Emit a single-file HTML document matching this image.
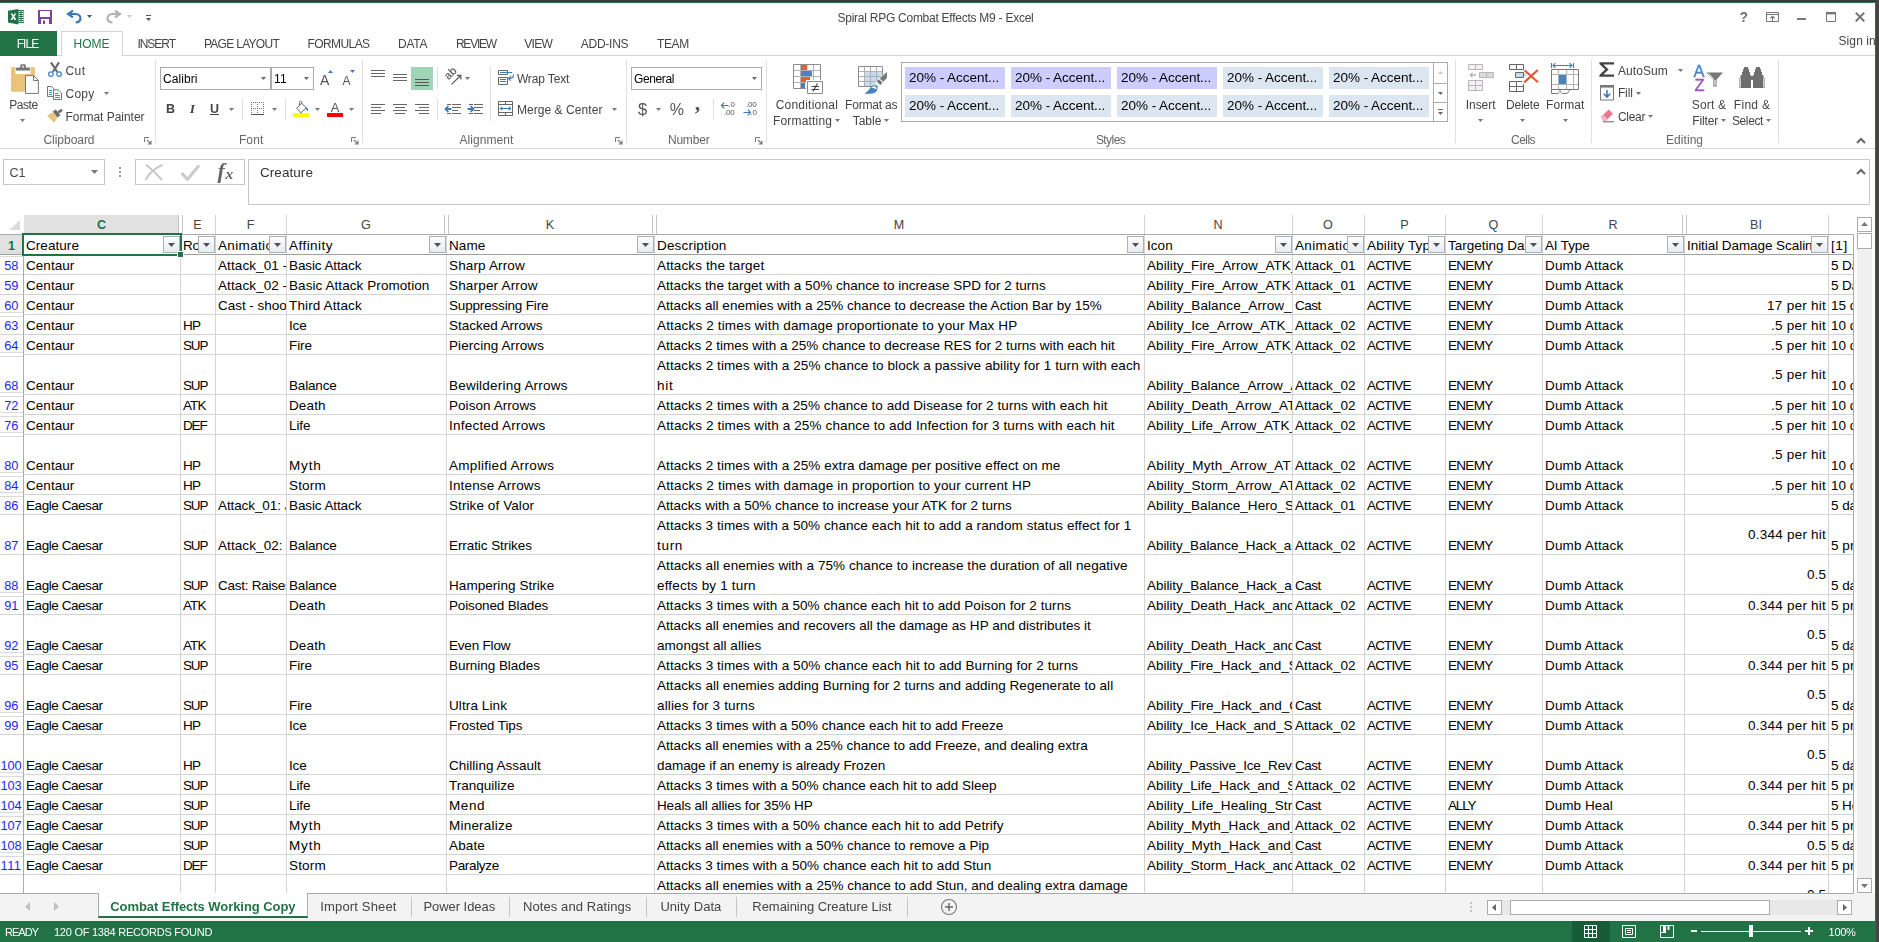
<!DOCTYPE html>
<html lang="en"><head><meta charset="utf-8"><title>Spiral RPG Combat Effects M9 - Excel</title>
<style>
html,body{margin:0;padding:0}
body{width:1879px;height:942px;position:relative;overflow:hidden;background:#fff;font-family:"Liberation Sans",sans-serif;font-size:12px;color:#444}
body div,body svg{position:absolute}
#sheet,#ui{left:0;top:0;width:1879px;height:942px}
#ui{will-change:transform}
.t{white-space:nowrap;line-height:16px;height:16px}
.st{width:100px;height:22px;line-height:22px;font-size:13.5px;color:#000;padding-left:4px;box-sizing:border-box;white-space:nowrap;overflow:hidden}
.c{font-size:13.5px;line-height:19px;color:#000;white-space:nowrap;overflow:hidden;padding-left:2px;box-sizing:border-box}
.c.w{white-space:nowrap;line-height:20px;padding-top:0}
.c.r{text-align:right;padding-right:2px;padding-left:0}
.fb{width:17px;height:17px;box-sizing:border-box;border:1px solid #a9b1b8;background:linear-gradient(#fdfdfe,#e6ebf1)}
</style></head>
<body>
<div id="sheet">
<svg style="left:8px;top:220px;" width="13" height="11" viewBox="0 0 13 11"><path d="M12 0V10H1Z" fill="#dcdcdc"/></svg>
<div style="left:24px;top:215px;width:155px;height:19px;background:#e1e1e1"></div>
<div class="t" style="left:23px;top:215.5px;font-size:12.6px;color:#217346;font-weight:700;line-height:18px;height:18px;width:157px;text-align:center;">C</div>
<div class="t" style="left:180px;top:215.5px;font-size:12.6px;color:#444;line-height:18px;height:18px;width:35px;text-align:center;">E</div>
<div class="t" style="left:215px;top:215.5px;font-size:12.6px;color:#444;line-height:18px;height:18px;width:71px;text-align:center;">F</div>
<div class="t" style="left:286px;top:215.5px;font-size:12.6px;color:#444;line-height:18px;height:18px;width:160px;text-align:center;">G</div>
<div class="t" style="left:446px;top:215.5px;font-size:12.6px;color:#444;line-height:18px;height:18px;width:208px;text-align:center;">K</div>
<div class="t" style="left:654px;top:215.5px;font-size:12.6px;color:#444;line-height:18px;height:18px;width:490px;text-align:center;">M</div>
<div class="t" style="left:1144px;top:215.5px;font-size:12.6px;color:#444;line-height:18px;height:18px;width:148px;text-align:center;">N</div>
<div class="t" style="left:1292px;top:215.5px;font-size:12.6px;color:#444;line-height:18px;height:18px;width:72px;text-align:center;">O</div>
<div class="t" style="left:1364px;top:215.5px;font-size:12.6px;color:#444;line-height:18px;height:18px;width:81px;text-align:center;">P</div>
<div class="t" style="left:1445px;top:215.5px;font-size:12.6px;color:#444;line-height:18px;height:18px;width:97px;text-align:center;">Q</div>
<div class="t" style="left:1542px;top:215.5px;font-size:12.6px;color:#444;line-height:18px;height:18px;width:142px;text-align:center;">R</div>
<div class="t" style="left:1684px;top:215.5px;font-size:12.6px;color:#444;line-height:18px;height:18px;width:144px;text-align:center;">BI</div>
<div style="left:178px;top:215px;width:1px;height:19px;background:#c4c4c4"></div>
<div style="left:182px;top:215px;width:1px;height:19px;background:#c4c4c4"></div>
<div style="left:215px;top:215px;width:1px;height:19px;background:#d4d4d4"></div>
<div style="left:286px;top:215px;width:1px;height:19px;background:#d4d4d4"></div>
<div style="left:444px;top:215px;width:1px;height:19px;background:#c4c4c4"></div>
<div style="left:448px;top:215px;width:1px;height:19px;background:#c4c4c4"></div>
<div style="left:652px;top:215px;width:1px;height:19px;background:#c4c4c4"></div>
<div style="left:656px;top:215px;width:1px;height:19px;background:#c4c4c4"></div>
<div style="left:1144px;top:215px;width:1px;height:19px;background:#d4d4d4"></div>
<div style="left:1292px;top:215px;width:1px;height:19px;background:#d4d4d4"></div>
<div style="left:1364px;top:215px;width:1px;height:19px;background:#d4d4d4"></div>
<div style="left:1445px;top:215px;width:1px;height:19px;background:#d4d4d4"></div>
<div style="left:1542px;top:215px;width:1px;height:19px;background:#d4d4d4"></div>
<div style="left:1682px;top:215px;width:1px;height:19px;background:#c4c4c4"></div>
<div style="left:1686px;top:215px;width:1px;height:19px;background:#c4c4c4"></div>
<div style="left:1828px;top:215px;width:1px;height:19px;background:#d4d4d4"></div>
<div style="left:180px;top:234px;width:1px;height:659px;background:#d4d4d4"></div>
<div style="left:215px;top:234px;width:1px;height:659px;background:#d4d4d4"></div>
<div style="left:286px;top:234px;width:1px;height:659px;background:#d4d4d4"></div>
<div style="left:446px;top:234px;width:1px;height:659px;background:#d4d4d4"></div>
<div style="left:654px;top:234px;width:1px;height:659px;background:#d4d4d4"></div>
<div style="left:1144px;top:234px;width:1px;height:659px;background:#d4d4d4"></div>
<div style="left:1292px;top:234px;width:1px;height:659px;background:#d4d4d4"></div>
<div style="left:1364px;top:234px;width:1px;height:659px;background:#d4d4d4"></div>
<div style="left:1445px;top:234px;width:1px;height:659px;background:#d4d4d4"></div>
<div style="left:1542px;top:234px;width:1px;height:659px;background:#d4d4d4"></div>
<div style="left:1684px;top:234px;width:1px;height:659px;background:#d4d4d4"></div>
<div style="left:1828px;top:234px;width:1px;height:659px;background:#d4d4d4"></div>
<div style="left:1853px;top:234px;width:1px;height:659px;background:#d4d4d4"></div>
<div style="left:24px;top:254px;width:1830px;height:1px;background:#d4d4d4"></div>
<div style="left:24px;top:274px;width:1830px;height:1px;background:#d4d4d4"></div>
<div style="left:24px;top:294px;width:1830px;height:1px;background:#d4d4d4"></div>
<div style="left:24px;top:314px;width:1830px;height:1px;background:#d4d4d4"></div>
<div style="left:24px;top:334px;width:1830px;height:1px;background:#d4d4d4"></div>
<div style="left:24px;top:354px;width:1830px;height:1px;background:#d4d4d4"></div>
<div style="left:24px;top:394px;width:1830px;height:1px;background:#d4d4d4"></div>
<div style="left:24px;top:414px;width:1830px;height:1px;background:#d4d4d4"></div>
<div style="left:24px;top:434px;width:1830px;height:1px;background:#d4d4d4"></div>
<div style="left:24px;top:474px;width:1830px;height:1px;background:#d4d4d4"></div>
<div style="left:24px;top:494px;width:1830px;height:1px;background:#d4d4d4"></div>
<div style="left:24px;top:514px;width:1830px;height:1px;background:#d4d4d4"></div>
<div style="left:24px;top:554px;width:1830px;height:1px;background:#d4d4d4"></div>
<div style="left:24px;top:594px;width:1830px;height:1px;background:#d4d4d4"></div>
<div style="left:24px;top:614px;width:1830px;height:1px;background:#d4d4d4"></div>
<div style="left:24px;top:654px;width:1830px;height:1px;background:#d4d4d4"></div>
<div style="left:24px;top:674px;width:1830px;height:1px;background:#d4d4d4"></div>
<div style="left:24px;top:714px;width:1830px;height:1px;background:#d4d4d4"></div>
<div style="left:24px;top:734px;width:1830px;height:1px;background:#d4d4d4"></div>
<div style="left:24px;top:774px;width:1830px;height:1px;background:#d4d4d4"></div>
<div style="left:24px;top:794px;width:1830px;height:1px;background:#d4d4d4"></div>
<div style="left:24px;top:814px;width:1830px;height:1px;background:#d4d4d4"></div>
<div style="left:24px;top:834px;width:1830px;height:1px;background:#d4d4d4"></div>
<div style="left:24px;top:854px;width:1830px;height:1px;background:#d4d4d4"></div>
<div style="left:24px;top:874px;width:1830px;height:1px;background:#d4d4d4"></div>
<div style="left:0px;top:234px;width:23px;height:20px;background:#e1e1e1"></div>
<div style="left:0px;top:252px;width:23px;height:1px;background:#dadada"></div>
<div style="left:0px;top:256px;width:23px;height:1px;background:#dadada"></div>
<div style="left:0px;top:274px;width:23px;height:1px;background:#d4d4d4"></div>
<div style="left:0px;top:294px;width:23px;height:1px;background:#d4d4d4"></div>
<div style="left:0px;top:312px;width:23px;height:1px;background:#dadada"></div>
<div style="left:0px;top:316px;width:23px;height:1px;background:#dadada"></div>
<div style="left:0px;top:334px;width:23px;height:1px;background:#d4d4d4"></div>
<div style="left:0px;top:352px;width:23px;height:1px;background:#dadada"></div>
<div style="left:0px;top:356px;width:23px;height:1px;background:#dadada"></div>
<div style="left:0px;top:392px;width:23px;height:1px;background:#dadada"></div>
<div style="left:0px;top:396px;width:23px;height:1px;background:#dadada"></div>
<div style="left:0px;top:412px;width:23px;height:1px;background:#dadada"></div>
<div style="left:0px;top:416px;width:23px;height:1px;background:#dadada"></div>
<div style="left:0px;top:432px;width:23px;height:1px;background:#dadada"></div>
<div style="left:0px;top:436px;width:23px;height:1px;background:#dadada"></div>
<div style="left:0px;top:472px;width:23px;height:1px;background:#dadada"></div>
<div style="left:0px;top:476px;width:23px;height:1px;background:#dadada"></div>
<div style="left:0px;top:492px;width:23px;height:1px;background:#dadada"></div>
<div style="left:0px;top:496px;width:23px;height:1px;background:#dadada"></div>
<div style="left:0px;top:514px;width:23px;height:1px;background:#d4d4d4"></div>
<div style="left:0px;top:554px;width:23px;height:1px;background:#d4d4d4"></div>
<div style="left:0px;top:592px;width:23px;height:1px;background:#dadada"></div>
<div style="left:0px;top:596px;width:23px;height:1px;background:#dadada"></div>
<div style="left:0px;top:614px;width:23px;height:1px;background:#d4d4d4"></div>
<div style="left:0px;top:652px;width:23px;height:1px;background:#dadada"></div>
<div style="left:0px;top:656px;width:23px;height:1px;background:#dadada"></div>
<div style="left:0px;top:674px;width:23px;height:1px;background:#d4d4d4"></div>
<div style="left:0px;top:712px;width:23px;height:1px;background:#dadada"></div>
<div style="left:0px;top:716px;width:23px;height:1px;background:#dadada"></div>
<div style="left:0px;top:734px;width:23px;height:1px;background:#d4d4d4"></div>
<div style="left:0px;top:772px;width:23px;height:1px;background:#dadada"></div>
<div style="left:0px;top:776px;width:23px;height:1px;background:#dadada"></div>
<div style="left:0px;top:794px;width:23px;height:1px;background:#d4d4d4"></div>
<div style="left:0px;top:812px;width:23px;height:1px;background:#dadada"></div>
<div style="left:0px;top:816px;width:23px;height:1px;background:#dadada"></div>
<div style="left:0px;top:834px;width:23px;height:1px;background:#d4d4d4"></div>
<div style="left:0px;top:852px;width:23px;height:1px;background:#dadada"></div>
<div style="left:0px;top:856px;width:23px;height:1px;background:#dadada"></div>
<div style="left:0px;top:874px;width:23px;height:1px;background:#d4d4d4"></div>
<div style="left:23px;top:234px;width:1px;height:659px;background:#ababab"></div>
<div class="t" style="left:0px;top:236.5px;font-size:12.8px;color:#217346;font-weight:700;line-height:18px;height:18px;width:23px;text-align:center;">1</div>
<div class="t" style="left:4.2px;top:256.5px;letter-spacing:-0.017px;font-size:12.8px;color:#1f1fff;line-height:18px;height:18px;">58</div>
<div class="t" style="left:4.2px;top:276.5px;letter-spacing:-0.017px;font-size:12.8px;color:#1f1fff;line-height:18px;height:18px;">59</div>
<div class="t" style="left:4.2px;top:296.5px;letter-spacing:-0.017px;font-size:12.8px;color:#1f1fff;line-height:18px;height:18px;">60</div>
<div class="t" style="left:4.2px;top:316.5px;letter-spacing:-0.017px;font-size:12.8px;color:#1f1fff;line-height:18px;height:18px;">63</div>
<div class="t" style="left:4.2px;top:336.5px;letter-spacing:-0.017px;font-size:12.8px;color:#1f1fff;line-height:18px;height:18px;">64</div>
<div class="t" style="left:4.2px;top:376.5px;letter-spacing:-0.017px;font-size:12.8px;color:#1f1fff;line-height:18px;height:18px;">68</div>
<div class="t" style="left:4.2px;top:396.5px;letter-spacing:-0.017px;font-size:12.8px;color:#1f1fff;line-height:18px;height:18px;">72</div>
<div class="t" style="left:4.2px;top:416.5px;letter-spacing:-0.017px;font-size:12.8px;color:#1f1fff;line-height:18px;height:18px;">76</div>
<div class="t" style="left:4.2px;top:456.5px;letter-spacing:-0.017px;font-size:12.8px;color:#1f1fff;line-height:18px;height:18px;">80</div>
<div class="t" style="left:4.2px;top:476.5px;letter-spacing:-0.017px;font-size:12.8px;color:#1f1fff;line-height:18px;height:18px;">84</div>
<div class="t" style="left:4.2px;top:496.5px;letter-spacing:-0.017px;font-size:12.8px;color:#1f1fff;line-height:18px;height:18px;">86</div>
<div class="t" style="left:4.2px;top:536.5px;letter-spacing:-0.017px;font-size:12.8px;color:#1f1fff;line-height:18px;height:18px;">87</div>
<div class="t" style="left:4.2px;top:576.5px;letter-spacing:-0.017px;font-size:12.8px;color:#1f1fff;line-height:18px;height:18px;">88</div>
<div class="t" style="left:4.2px;top:596.5px;letter-spacing:-0.017px;font-size:12.8px;color:#1f1fff;line-height:18px;height:18px;">91</div>
<div class="t" style="left:4.2px;top:636.5px;letter-spacing:-0.017px;font-size:12.8px;color:#1f1fff;line-height:18px;height:18px;">92</div>
<div class="t" style="left:4.2px;top:656.5px;letter-spacing:-0.017px;font-size:12.8px;color:#1f1fff;line-height:18px;height:18px;">95</div>
<div class="t" style="left:4.2px;top:696.5px;letter-spacing:-0.017px;font-size:12.8px;color:#1f1fff;line-height:18px;height:18px;">96</div>
<div class="t" style="left:4.2px;top:716.5px;letter-spacing:-0.017px;font-size:12.8px;color:#1f1fff;line-height:18px;height:18px;">99</div>
<div class="t" style="left:0.6px;top:756.5px;letter-spacing:-0.186px;font-size:12.8px;color:#1f1fff;line-height:18px;height:18px;">100</div>
<div class="t" style="left:0.6px;top:776.5px;letter-spacing:-0.186px;font-size:12.8px;color:#1f1fff;line-height:18px;height:18px;">103</div>
<div class="t" style="left:0.6px;top:796.5px;letter-spacing:-0.186px;font-size:12.8px;color:#1f1fff;line-height:18px;height:18px;">104</div>
<div class="t" style="left:0.6px;top:816.5px;letter-spacing:-0.186px;font-size:12.8px;color:#1f1fff;line-height:18px;height:18px;">107</div>
<div class="t" style="left:0.6px;top:836.5px;letter-spacing:-0.186px;font-size:12.8px;color:#1f1fff;line-height:18px;height:18px;">108</div>
<div class="t" style="left:0.6px;top:856.5px;letter-spacing:0.449px;font-size:12.8px;color:#1f1fff;line-height:18px;height:18px;">111</div>
<div style="left:0px;top:234px;width:1854px;height:1px;background:#ababab"></div>
<div style="left:0px;top:254px;width:1854px;height:1px;background:#a0a0a0"></div>
<div style="left:1853px;top:234px;width:1px;height:659px;background:#ababab"></div>
<div class="c" style="left:24px;top:236px;width:140px;height:18px;letter-spacing:0.053px;">Creature</div>
<div class="c" style="left:181px;top:236px;width:18px;height:18px;letter-spacing:-0.281px;">Role</div>
<div class="c" style="left:216px;top:236px;width:54px;height:18px;letter-spacing:0.345px;">Animation</div>
<div class="c" style="left:287px;top:236px;width:143px;height:18px;letter-spacing:0.455px;">Affinity</div>
<div class="c" style="left:447px;top:236px;width:191px;height:18px;letter-spacing:0.078px;">Name</div>
<div class="c" style="left:655px;top:236px;width:473px;height:18px;letter-spacing:0.182px;">Description</div>
<div class="c" style="left:1145px;top:236px;width:131px;height:18px;letter-spacing:0.062px;">Icon</div>
<div class="c" style="left:1293px;top:236px;width:55px;height:18px;letter-spacing:0.345px;">Animation</div>
<div class="c" style="left:1365px;top:236px;width:64px;height:18px;letter-spacing:0.171px;">Ability Type</div>
<div class="c" style="left:1446px;top:236px;width:80px;height:18px;letter-spacing:-0.009px;">Targeting Data</div>
<div class="c" style="left:1543px;top:236px;width:125px;height:18px;letter-spacing:-0.132px;">AI Type</div>
<div class="c" style="left:1685px;top:236px;width:127px;height:18px;letter-spacing:-0.062px;">Initial Damage Scaling</div>
<div class="c" style="left:1829px;top:236px;width:24px;height:18px;letter-spacing:0.594px;">[1]</div>
<div class="c" style="left:24px;top:256px;width:156px;height:18px;letter-spacing:0.045px;">Centaur</div>
<div class="c" style="left:216px;top:256px;width:70px;height:18px;letter-spacing:0.091px;">Attack_01 - shoot</div>
<div class="c" style="left:287px;top:256px;width:159px;height:18px;letter-spacing:-0.100px;">Basic Attack</div>
<div class="c" style="left:447px;top:256px;width:207px;height:18px;letter-spacing:0.148px;">Sharp Arrow</div>
<div class="c" style="left:655px;top:256px;width:489px;height:18px;letter-spacing:0.122px;">Attacks the target</div>
<div class="c" style="left:1145px;top:256px;width:147px;height:18px;letter-spacing:0.074px;">Ability_Fire_Arrow_ATK_01</div>
<div class="c" style="left:1293px;top:256px;width:71px;height:18px;letter-spacing:0.068px;">Attack_01</div>
<div class="c" style="left:1365px;top:256px;width:80px;height:18px;letter-spacing:-0.865px;">ACTIVE</div>
<div class="c" style="left:1446px;top:256px;width:96px;height:18px;letter-spacing:-0.706px;">ENEMY</div>
<div class="c" style="left:1543px;top:256px;width:141px;height:18px;letter-spacing:0.163px;">Dumb Attack</div>
<div class="c" style="left:1829px;top:256px;width:24px;height:18px;letter-spacing:-0.162px;">5 Damage</div>
<div class="c" style="left:24px;top:276px;width:156px;height:18px;letter-spacing:0.045px;">Centaur</div>
<div class="c" style="left:216px;top:276px;width:70px;height:18px;letter-spacing:0.091px;">Attack_02 - shoot</div>
<div class="c" style="left:287px;top:276px;width:159px;height:18px;letter-spacing:0.073px;">Basic Attack Promotion</div>
<div class="c" style="left:447px;top:276px;width:207px;height:18px;letter-spacing:0.179px;">Sharper Arrow</div>
<div class="c" style="left:655px;top:276px;width:489px;height:18px;letter-spacing:0.011px;">Attacks the target with a 50% chance to increase SPD for 2 turns</div>
<div class="c" style="left:1145px;top:276px;width:147px;height:18px;letter-spacing:0.074px;">Ability_Fire_Arrow_ATK_02</div>
<div class="c" style="left:1293px;top:276px;width:71px;height:18px;letter-spacing:0.068px;">Attack_01</div>
<div class="c" style="left:1365px;top:276px;width:80px;height:18px;letter-spacing:-0.865px;">ACTIVE</div>
<div class="c" style="left:1446px;top:276px;width:96px;height:18px;letter-spacing:-0.706px;">ENEMY</div>
<div class="c" style="left:1543px;top:276px;width:141px;height:18px;letter-spacing:0.163px;">Dumb Attack</div>
<div class="c" style="left:1829px;top:276px;width:24px;height:18px;letter-spacing:-0.162px;">5 Damage</div>
<div class="c" style="left:24px;top:296px;width:156px;height:18px;letter-spacing:0.045px;">Centaur</div>
<div class="c" style="left:216px;top:296px;width:70px;height:18px;letter-spacing:-0.036px;">Cast - shoot up</div>
<div class="c" style="left:287px;top:296px;width:159px;height:18px;letter-spacing:0.134px;">Third Attack</div>
<div class="c" style="left:447px;top:296px;width:207px;height:18px;letter-spacing:-0.171px;">Suppressing Fire</div>
<div class="c" style="left:655px;top:296px;width:489px;height:18px;letter-spacing:0.008px;">Attacks all enemies with a 25% chance to decrease the Action Bar by 15%</div>
<div class="c" style="left:1145px;top:296px;width:147px;height:18px;letter-spacing:0.097px;">Ability_Balance_Arrow_Rain</div>
<div class="c" style="left:1293px;top:296px;width:71px;height:18px;letter-spacing:-0.465px;">Cast</div>
<div class="c" style="left:1365px;top:296px;width:80px;height:18px;letter-spacing:-0.865px;">ACTIVE</div>
<div class="c" style="left:1446px;top:296px;width:96px;height:18px;letter-spacing:-0.706px;">ENEMY</div>
<div class="c" style="left:1543px;top:296px;width:141px;height:18px;letter-spacing:0.163px;">Dumb Attack</div>
<div class="c r" style="left:1685px;top:296px;width:143px;height:18px;letter-spacing:0.263px;">17 per hit</div>
<div class="c" style="left:1829px;top:296px;width:24px;height:18px;letter-spacing:-0.035px;">15 damage</div>
<div class="c" style="left:24px;top:316px;width:156px;height:18px;letter-spacing:0.045px;">Centaur</div>
<div class="c" style="left:181px;top:316px;width:34px;height:18px;letter-spacing:-0.836px;">HP</div>
<div class="c" style="left:287px;top:316px;width:159px;height:18px;letter-spacing:-0.141px;">Ice</div>
<div class="c" style="left:447px;top:316px;width:207px;height:18px;letter-spacing:-0.019px;">Stacked Arrows</div>
<div class="c" style="left:655px;top:316px;width:489px;height:18px;letter-spacing:0.152px;">Attacks 2 times with damage proportionate to your Max HP</div>
<div class="c" style="left:1145px;top:316px;width:147px;height:18px;letter-spacing:0.078px;">Ability_Ice_Arrow_ATK_02</div>
<div class="c" style="left:1293px;top:316px;width:71px;height:18px;letter-spacing:0.068px;">Attack_02</div>
<div class="c" style="left:1365px;top:316px;width:80px;height:18px;letter-spacing:-0.865px;">ACTIVE</div>
<div class="c" style="left:1446px;top:316px;width:96px;height:18px;letter-spacing:-0.706px;">ENEMY</div>
<div class="c" style="left:1543px;top:316px;width:141px;height:18px;letter-spacing:0.163px;">Dumb Attack</div>
<div class="c r" style="left:1685px;top:316px;width:143px;height:18px;letter-spacing:0.256px;">.5 per hit</div>
<div class="c" style="left:1829px;top:316px;width:24px;height:18px;letter-spacing:-0.035px;">10 damage</div>
<div class="c" style="left:24px;top:336px;width:156px;height:18px;letter-spacing:0.045px;">Centaur</div>
<div class="c" style="left:181px;top:336px;width:34px;height:18px;letter-spacing:-1.167px;">SUP</div>
<div class="c" style="left:287px;top:336px;width:159px;height:18px;letter-spacing:-0.105px;">Fire</div>
<div class="c" style="left:447px;top:336px;width:207px;height:18px;letter-spacing:0.079px;">Piercing Arrows</div>
<div class="c" style="left:655px;top:336px;width:489px;height:18px;">Attacks 2 times with a 25% chance to decrease RES for 2 turns with each hit</div>
<div class="c" style="left:1145px;top:336px;width:147px;height:18px;letter-spacing:0.074px;">Ability_Fire_Arrow_ATK_03</div>
<div class="c" style="left:1293px;top:336px;width:71px;height:18px;letter-spacing:0.068px;">Attack_02</div>
<div class="c" style="left:1365px;top:336px;width:80px;height:18px;letter-spacing:-0.865px;">ACTIVE</div>
<div class="c" style="left:1446px;top:336px;width:96px;height:18px;letter-spacing:-0.706px;">ENEMY</div>
<div class="c" style="left:1543px;top:336px;width:141px;height:18px;letter-spacing:0.163px;">Dumb Attack</div>
<div class="c r" style="left:1685px;top:336px;width:143px;height:18px;letter-spacing:0.256px;">.5 per hit</div>
<div class="c" style="left:1829px;top:336px;width:24px;height:18px;letter-spacing:-0.035px;">10 damage</div>
<div class="c" style="left:24px;top:376px;width:156px;height:18px;letter-spacing:0.045px;">Centaur</div>
<div class="c" style="left:181px;top:376px;width:34px;height:18px;letter-spacing:-1.167px;">SUP</div>
<div class="c" style="left:287px;top:376px;width:159px;height:18px;letter-spacing:-0.163px;">Balance</div>
<div class="c" style="left:447px;top:376px;width:207px;height:18px;letter-spacing:0.216px;">Bewildering Arrows</div>
<div class="c" style="left:655px;top:356px;width:489px;height:20px;letter-spacing:0.085px;">Attacks 2 times with a 25% chance to block a passive ability for 1 turn with each</div>
<div class="c" style="left:655px;top:376px;width:489px;height:20px;letter-spacing:0.693px;">hit</div>
<div class="c" style="left:1145px;top:376px;width:147px;height:18px;letter-spacing:0.040px;">Ability_Balance_Arrow_ATK</div>
<div class="c" style="left:1293px;top:376px;width:71px;height:18px;letter-spacing:0.068px;">Attack_02</div>
<div class="c" style="left:1365px;top:376px;width:80px;height:18px;letter-spacing:-0.865px;">ACTIVE</div>
<div class="c" style="left:1446px;top:376px;width:96px;height:18px;letter-spacing:-0.706px;">ENEMY</div>
<div class="c" style="left:1543px;top:376px;width:141px;height:18px;letter-spacing:0.163px;">Dumb Attack</div>
<div class="c r" style="left:1685px;top:356px;width:143px;height:38px;line-height:37px;letter-spacing:0.256px;">.5 per hit</div>
<div class="c" style="left:1829px;top:376px;width:24px;height:18px;letter-spacing:-0.035px;">10 damage</div>
<div class="c" style="left:24px;top:396px;width:156px;height:18px;letter-spacing:0.045px;">Centaur</div>
<div class="c" style="left:181px;top:396px;width:34px;height:18px;letter-spacing:-0.885px;">ATK</div>
<div class="c" style="left:287px;top:396px;width:159px;height:18px;letter-spacing:0.125px;">Death</div>
<div class="c" style="left:447px;top:396px;width:207px;height:18px;letter-spacing:0.056px;">Poison Arrows</div>
<div class="c" style="left:655px;top:396px;width:489px;height:18px;letter-spacing:0.065px;">Attacks 2 times with a 25% chance to add Disease for 2 turns with each hit</div>
<div class="c" style="left:1145px;top:396px;width:147px;height:18px;letter-spacing:0.112px;">Ability_Death_Arrow_ATK_02</div>
<div class="c" style="left:1293px;top:396px;width:71px;height:18px;letter-spacing:0.068px;">Attack_02</div>
<div class="c" style="left:1365px;top:396px;width:80px;height:18px;letter-spacing:-0.865px;">ACTIVE</div>
<div class="c" style="left:1446px;top:396px;width:96px;height:18px;letter-spacing:-0.706px;">ENEMY</div>
<div class="c" style="left:1543px;top:396px;width:141px;height:18px;letter-spacing:0.163px;">Dumb Attack</div>
<div class="c r" style="left:1685px;top:396px;width:143px;height:18px;letter-spacing:0.256px;">.5 per hit</div>
<div class="c" style="left:1829px;top:396px;width:24px;height:18px;letter-spacing:-0.035px;">10 damage</div>
<div class="c" style="left:24px;top:416px;width:156px;height:18px;letter-spacing:0.045px;">Centaur</div>
<div class="c" style="left:181px;top:416px;width:34px;height:18px;letter-spacing:-1.182px;">DEF</div>
<div class="c" style="left:287px;top:416px;width:159px;height:18px;letter-spacing:-0.090px;">Life</div>
<div class="c" style="left:447px;top:416px;width:207px;height:18px;letter-spacing:0.223px;">Infected Arrows</div>
<div class="c" style="left:655px;top:416px;width:489px;height:18px;letter-spacing:0.128px;">Attacks 2 times with a 25% chance to add Infection for 3 turns with each hit</div>
<div class="c" style="left:1145px;top:416px;width:147px;height:18px;letter-spacing:0.077px;">Ability_Life_Arrow_ATK_02</div>
<div class="c" style="left:1293px;top:416px;width:71px;height:18px;letter-spacing:0.068px;">Attack_02</div>
<div class="c" style="left:1365px;top:416px;width:80px;height:18px;letter-spacing:-0.865px;">ACTIVE</div>
<div class="c" style="left:1446px;top:416px;width:96px;height:18px;letter-spacing:-0.706px;">ENEMY</div>
<div class="c" style="left:1543px;top:416px;width:141px;height:18px;letter-spacing:0.163px;">Dumb Attack</div>
<div class="c r" style="left:1685px;top:416px;width:143px;height:18px;letter-spacing:0.256px;">.5 per hit</div>
<div class="c" style="left:1829px;top:416px;width:24px;height:18px;letter-spacing:-0.035px;">10 damage</div>
<div class="c" style="left:24px;top:456px;width:156px;height:18px;letter-spacing:0.045px;">Centaur</div>
<div class="c" style="left:181px;top:456px;width:34px;height:18px;letter-spacing:-0.836px;">HP</div>
<div class="c" style="left:287px;top:456px;width:159px;height:18px;letter-spacing:0.836px;">Myth</div>
<div class="c" style="left:447px;top:456px;width:207px;height:18px;letter-spacing:0.296px;">Amplified Arrows</div>
<div class="c" style="left:655px;top:456px;width:489px;height:20px;letter-spacing:0.079px;">Attacks 2 times with a 25% extra damage per positive effect on me</div>
<div class="c" style="left:1145px;top:456px;width:147px;height:18px;letter-spacing:0.226px;">Ability_Myth_Arrow_ATK_02</div>
<div class="c" style="left:1293px;top:456px;width:71px;height:18px;letter-spacing:0.068px;">Attack_02</div>
<div class="c" style="left:1365px;top:456px;width:80px;height:18px;letter-spacing:-0.865px;">ACTIVE</div>
<div class="c" style="left:1446px;top:456px;width:96px;height:18px;letter-spacing:-0.706px;">ENEMY</div>
<div class="c" style="left:1543px;top:456px;width:141px;height:18px;letter-spacing:0.163px;">Dumb Attack</div>
<div class="c r" style="left:1685px;top:436px;width:143px;height:38px;line-height:37px;letter-spacing:0.256px;">.5 per hit</div>
<div class="c" style="left:1829px;top:456px;width:24px;height:18px;letter-spacing:-0.035px;">10 damage</div>
<div class="c" style="left:24px;top:476px;width:156px;height:18px;letter-spacing:0.045px;">Centaur</div>
<div class="c" style="left:181px;top:476px;width:34px;height:18px;letter-spacing:-0.836px;">HP</div>
<div class="c" style="left:287px;top:476px;width:159px;height:18px;letter-spacing:0.178px;">Storm</div>
<div class="c" style="left:447px;top:476px;width:207px;height:18px;letter-spacing:0.169px;">Intense Arrows</div>
<div class="c" style="left:655px;top:476px;width:489px;height:18px;letter-spacing:0.169px;">Attacks 2 times with damage in proportion to your current HP</div>
<div class="c" style="left:1145px;top:476px;width:147px;height:18px;letter-spacing:0.123px;">Ability_Storm_Arrow_ATK_02</div>
<div class="c" style="left:1293px;top:476px;width:71px;height:18px;letter-spacing:0.068px;">Attack_02</div>
<div class="c" style="left:1365px;top:476px;width:80px;height:18px;letter-spacing:-0.865px;">ACTIVE</div>
<div class="c" style="left:1446px;top:476px;width:96px;height:18px;letter-spacing:-0.706px;">ENEMY</div>
<div class="c" style="left:1543px;top:476px;width:141px;height:18px;letter-spacing:0.163px;">Dumb Attack</div>
<div class="c r" style="left:1685px;top:476px;width:143px;height:18px;letter-spacing:0.256px;">.5 per hit</div>
<div class="c" style="left:1829px;top:476px;width:24px;height:18px;letter-spacing:-0.035px;">10 damage</div>
<div class="c" style="left:24px;top:496px;width:156px;height:18px;letter-spacing:-0.438px;">Eagle Caesar</div>
<div class="c" style="left:181px;top:496px;width:34px;height:18px;letter-spacing:-1.167px;">SUP</div>
<div class="c" style="left:216px;top:496px;width:70px;height:18px;letter-spacing:-0.100px;">Attack_01: Jab</div>
<div class="c" style="left:287px;top:496px;width:159px;height:18px;letter-spacing:-0.100px;">Basic Attack</div>
<div class="c" style="left:447px;top:496px;width:207px;height:18px;letter-spacing:0.087px;">Strike of Valor</div>
<div class="c" style="left:655px;top:496px;width:489px;height:18px;letter-spacing:0.016px;">Attacks with a 50% chance to increase your ATK for 2 turns</div>
<div class="c" style="left:1145px;top:496px;width:147px;height:18px;letter-spacing:0.065px;">Ability_Balance_Hero_Strike</div>
<div class="c" style="left:1293px;top:496px;width:71px;height:18px;letter-spacing:0.068px;">Attack_01</div>
<div class="c" style="left:1365px;top:496px;width:80px;height:18px;letter-spacing:-0.865px;">ACTIVE</div>
<div class="c" style="left:1446px;top:496px;width:96px;height:18px;letter-spacing:-0.706px;">ENEMY</div>
<div class="c" style="left:1543px;top:496px;width:141px;height:18px;letter-spacing:0.163px;">Dumb Attack</div>
<div class="c" style="left:1829px;top:496px;width:24px;height:18px;letter-spacing:-0.051px;">5 damage</div>
<div class="c" style="left:24px;top:536px;width:156px;height:18px;letter-spacing:-0.438px;">Eagle Caesar</div>
<div class="c" style="left:181px;top:536px;width:34px;height:18px;letter-spacing:-1.167px;">SUP</div>
<div class="c" style="left:216px;top:536px;width:70px;height:18px;letter-spacing:0.087px;">Attack_02:</div>
<div class="c" style="left:287px;top:536px;width:159px;height:18px;letter-spacing:-0.163px;">Balance</div>
<div class="c" style="left:447px;top:536px;width:207px;height:18px;letter-spacing:-0.076px;">Erratic Strikes</div>
<div class="c" style="left:655px;top:516px;width:489px;height:20px;letter-spacing:0.071px;">Attacks 3 times with a 50% chance each hit to add a random status effect for 1</div>
<div class="c" style="left:655px;top:536px;width:489px;height:20px;letter-spacing:0.688px;">turn</div>
<div class="c" style="left:1145px;top:536px;width:147px;height:18px;letter-spacing:-0.060px;">Ability_Balance_Hack_and_Slash</div>
<div class="c" style="left:1293px;top:536px;width:71px;height:18px;letter-spacing:0.068px;">Attack_02</div>
<div class="c" style="left:1365px;top:536px;width:80px;height:18px;letter-spacing:-0.865px;">ACTIVE</div>
<div class="c" style="left:1446px;top:536px;width:96px;height:18px;letter-spacing:-0.706px;">ENEMY</div>
<div class="c" style="left:1543px;top:536px;width:141px;height:18px;letter-spacing:0.163px;">Dumb Attack</div>
<div class="c r" style="left:1685px;top:516px;width:143px;height:38px;line-height:37px;letter-spacing:0.220px;">0.344 per hit</div>
<div class="c" style="left:1829px;top:536px;width:24px;height:18px;letter-spacing:0.044px;">5 prc</div>
<div class="c" style="left:24px;top:576px;width:156px;height:18px;letter-spacing:-0.438px;">Eagle Caesar</div>
<div class="c" style="left:181px;top:576px;width:34px;height:18px;letter-spacing:-1.167px;">SUP</div>
<div class="c" style="left:216px;top:576px;width:70px;height:18px;letter-spacing:-0.248px;">Cast: Raises sword</div>
<div class="c" style="left:287px;top:576px;width:159px;height:18px;letter-spacing:-0.163px;">Balance</div>
<div class="c" style="left:447px;top:576px;width:207px;height:18px;letter-spacing:0.060px;">Hampering Strike</div>
<div class="c" style="left:655px;top:556px;width:489px;height:20px;letter-spacing:0.068px;">Attacks all enemies with a 75% chance to increase the duration of all negative</div>
<div class="c" style="left:655px;top:576px;width:489px;height:20px;letter-spacing:0.176px;">effects by 1 turn</div>
<div class="c" style="left:1145px;top:576px;width:147px;height:18px;letter-spacing:-0.039px;">Ability_Balance_Hack_and_Cast</div>
<div class="c" style="left:1293px;top:576px;width:71px;height:18px;letter-spacing:-0.465px;">Cast</div>
<div class="c" style="left:1365px;top:576px;width:80px;height:18px;letter-spacing:-0.865px;">ACTIVE</div>
<div class="c" style="left:1446px;top:576px;width:96px;height:18px;letter-spacing:-0.706px;">ENEMY</div>
<div class="c" style="left:1543px;top:576px;width:141px;height:18px;letter-spacing:0.163px;">Dumb Attack</div>
<div class="c r" style="left:1685px;top:556px;width:143px;height:38px;line-height:37px;letter-spacing:0.073px;">0.5</div>
<div class="c" style="left:1829px;top:576px;width:24px;height:18px;letter-spacing:-0.051px;">5 damage</div>
<div class="c" style="left:24px;top:596px;width:156px;height:18px;letter-spacing:-0.438px;">Eagle Caesar</div>
<div class="c" style="left:181px;top:596px;width:34px;height:18px;letter-spacing:-0.885px;">ATK</div>
<div class="c" style="left:287px;top:596px;width:159px;height:18px;letter-spacing:0.125px;">Death</div>
<div class="c" style="left:447px;top:596px;width:207px;height:18px;letter-spacing:-0.145px;">Poisoned Blades</div>
<div class="c" style="left:655px;top:596px;width:489px;height:18px;letter-spacing:0.052px;">Attacks 3 times with a 50% chance each hit to add Poison for 2 turns</div>
<div class="c" style="left:1145px;top:596px;width:147px;height:18px;">Ability_Death_Hack_and_Slash</div>
<div class="c" style="left:1293px;top:596px;width:71px;height:18px;letter-spacing:0.068px;">Attack_02</div>
<div class="c" style="left:1365px;top:596px;width:80px;height:18px;letter-spacing:-0.865px;">ACTIVE</div>
<div class="c" style="left:1446px;top:596px;width:96px;height:18px;letter-spacing:-0.706px;">ENEMY</div>
<div class="c" style="left:1543px;top:596px;width:141px;height:18px;letter-spacing:0.163px;">Dumb Attack</div>
<div class="c r" style="left:1685px;top:596px;width:143px;height:18px;letter-spacing:0.220px;">0.344 per hit</div>
<div class="c" style="left:1829px;top:596px;width:24px;height:18px;letter-spacing:0.044px;">5 prc</div>
<div class="c" style="left:24px;top:636px;width:156px;height:18px;letter-spacing:-0.438px;">Eagle Caesar</div>
<div class="c" style="left:181px;top:636px;width:34px;height:18px;letter-spacing:-0.885px;">ATK</div>
<div class="c" style="left:287px;top:636px;width:159px;height:18px;letter-spacing:0.125px;">Death</div>
<div class="c" style="left:447px;top:636px;width:207px;height:18px;letter-spacing:-0.198px;">Even Flow</div>
<div class="c" style="left:655px;top:616px;width:489px;height:20px;letter-spacing:0.014px;">Attacks all enemies and recovers all the damage as HP and distributes it</div>
<div class="c" style="left:655px;top:636px;width:489px;height:20px;letter-spacing:0.047px;">amongst all allies</div>
<div class="c" style="left:1145px;top:636px;width:147px;height:18px;letter-spacing:0.024px;">Ability_Death_Hack_and_Cast</div>
<div class="c" style="left:1293px;top:636px;width:71px;height:18px;letter-spacing:-0.465px;">Cast</div>
<div class="c" style="left:1365px;top:636px;width:80px;height:18px;letter-spacing:-0.865px;">ACTIVE</div>
<div class="c" style="left:1446px;top:636px;width:96px;height:18px;letter-spacing:-0.706px;">ENEMY</div>
<div class="c" style="left:1543px;top:636px;width:141px;height:18px;letter-spacing:0.163px;">Dumb Attack</div>
<div class="c r" style="left:1685px;top:616px;width:143px;height:38px;line-height:37px;letter-spacing:0.073px;">0.5</div>
<div class="c" style="left:1829px;top:636px;width:24px;height:18px;letter-spacing:-0.051px;">5 damage</div>
<div class="c" style="left:24px;top:656px;width:156px;height:18px;letter-spacing:-0.438px;">Eagle Caesar</div>
<div class="c" style="left:181px;top:656px;width:34px;height:18px;letter-spacing:-1.167px;">SUP</div>
<div class="c" style="left:287px;top:656px;width:159px;height:18px;letter-spacing:-0.105px;">Fire</div>
<div class="c" style="left:447px;top:656px;width:207px;height:18px;letter-spacing:-0.048px;">Burning Blades</div>
<div class="c" style="left:655px;top:656px;width:489px;height:18px;letter-spacing:0.077px;">Attacks 3 times with a 50% chance each hit to add Burning for 2 turns</div>
<div class="c" style="left:1145px;top:656px;width:147px;height:18px;letter-spacing:-0.040px;">Ability_Fire_Hack_and_Slash</div>
<div class="c" style="left:1293px;top:656px;width:71px;height:18px;letter-spacing:0.068px;">Attack_02</div>
<div class="c" style="left:1365px;top:656px;width:80px;height:18px;letter-spacing:-0.865px;">ACTIVE</div>
<div class="c" style="left:1446px;top:656px;width:96px;height:18px;letter-spacing:-0.706px;">ENEMY</div>
<div class="c" style="left:1543px;top:656px;width:141px;height:18px;letter-spacing:0.163px;">Dumb Attack</div>
<div class="c r" style="left:1685px;top:656px;width:143px;height:18px;letter-spacing:0.220px;">0.344 per hit</div>
<div class="c" style="left:1829px;top:656px;width:24px;height:18px;letter-spacing:0.044px;">5 prc</div>
<div class="c" style="left:24px;top:696px;width:156px;height:18px;letter-spacing:-0.438px;">Eagle Caesar</div>
<div class="c" style="left:181px;top:696px;width:34px;height:18px;letter-spacing:-1.167px;">SUP</div>
<div class="c" style="left:287px;top:696px;width:159px;height:18px;letter-spacing:-0.105px;">Fire</div>
<div class="c" style="left:447px;top:696px;width:207px;height:18px;letter-spacing:0.100px;">Ultra Link</div>
<div class="c" style="left:655px;top:676px;width:489px;height:20px;letter-spacing:0.049px;">Attacks all enemies adding Burning for 2 turns and adding Regenerate to all</div>
<div class="c" style="left:655px;top:696px;width:489px;height:20px;letter-spacing:0.144px;">allies for 3 turns</div>
<div class="c" style="left:1145px;top:696px;width:147px;height:18px;letter-spacing:-0.016px;">Ability_Fire_Hack_and_Cast</div>
<div class="c" style="left:1293px;top:696px;width:71px;height:18px;letter-spacing:-0.465px;">Cast</div>
<div class="c" style="left:1365px;top:696px;width:80px;height:18px;letter-spacing:-0.865px;">ACTIVE</div>
<div class="c" style="left:1446px;top:696px;width:96px;height:18px;letter-spacing:-0.706px;">ENEMY</div>
<div class="c" style="left:1543px;top:696px;width:141px;height:18px;letter-spacing:0.163px;">Dumb Attack</div>
<div class="c r" style="left:1685px;top:676px;width:143px;height:38px;line-height:37px;letter-spacing:0.073px;">0.5</div>
<div class="c" style="left:1829px;top:696px;width:24px;height:18px;letter-spacing:-0.051px;">5 damage</div>
<div class="c" style="left:24px;top:716px;width:156px;height:18px;letter-spacing:-0.438px;">Eagle Caesar</div>
<div class="c" style="left:181px;top:716px;width:34px;height:18px;letter-spacing:-0.836px;">HP</div>
<div class="c" style="left:287px;top:716px;width:159px;height:18px;letter-spacing:-0.141px;">Ice</div>
<div class="c" style="left:447px;top:716px;width:207px;height:18px;letter-spacing:-0.065px;">Frosted Tips</div>
<div class="c" style="left:655px;top:716px;width:489px;height:18px;letter-spacing:-0.008px;">Attacks 3 times with a 50% chance each hit to add Freeze</div>
<div class="c" style="left:1145px;top:716px;width:147px;height:18px;letter-spacing:-0.041px;">Ability_Ice_Hack_and_Slash</div>
<div class="c" style="left:1293px;top:716px;width:71px;height:18px;letter-spacing:0.068px;">Attack_02</div>
<div class="c" style="left:1365px;top:716px;width:80px;height:18px;letter-spacing:-0.865px;">ACTIVE</div>
<div class="c" style="left:1446px;top:716px;width:96px;height:18px;letter-spacing:-0.706px;">ENEMY</div>
<div class="c" style="left:1543px;top:716px;width:141px;height:18px;letter-spacing:0.163px;">Dumb Attack</div>
<div class="c r" style="left:1685px;top:716px;width:143px;height:18px;letter-spacing:0.220px;">0.344 per hit</div>
<div class="c" style="left:1829px;top:716px;width:24px;height:18px;letter-spacing:0.044px;">5 prc</div>
<div class="c" style="left:24px;top:756px;width:156px;height:18px;letter-spacing:-0.438px;">Eagle Caesar</div>
<div class="c" style="left:181px;top:756px;width:34px;height:18px;letter-spacing:-0.836px;">HP</div>
<div class="c" style="left:287px;top:756px;width:159px;height:18px;letter-spacing:-0.141px;">Ice</div>
<div class="c" style="left:447px;top:756px;width:207px;height:18px;letter-spacing:0.021px;">Chilling Assault</div>
<div class="c" style="left:655px;top:736px;width:489px;height:20px;letter-spacing:-0.011px;">Attacks all enemies with a 25% chance to add Freeze, and dealing extra</div>
<div class="c" style="left:655px;top:756px;width:489px;height:20px;letter-spacing:-0.040px;">damage if an enemy is already Frozen</div>
<div class="c" style="left:1145px;top:756px;width:147px;height:18px;letter-spacing:-0.135px;">Ability_Passive_Ice_Revenge</div>
<div class="c" style="left:1293px;top:756px;width:71px;height:18px;letter-spacing:-0.465px;">Cast</div>
<div class="c" style="left:1365px;top:756px;width:80px;height:18px;letter-spacing:-0.865px;">ACTIVE</div>
<div class="c" style="left:1446px;top:756px;width:96px;height:18px;letter-spacing:-0.706px;">ENEMY</div>
<div class="c" style="left:1543px;top:756px;width:141px;height:18px;letter-spacing:0.163px;">Dumb Attack</div>
<div class="c r" style="left:1685px;top:736px;width:143px;height:38px;line-height:37px;letter-spacing:0.073px;">0.5</div>
<div class="c" style="left:1829px;top:756px;width:24px;height:18px;letter-spacing:-0.051px;">5 damage</div>
<div class="c" style="left:24px;top:776px;width:156px;height:18px;letter-spacing:-0.438px;">Eagle Caesar</div>
<div class="c" style="left:181px;top:776px;width:34px;height:18px;letter-spacing:-1.167px;">SUP</div>
<div class="c" style="left:287px;top:776px;width:159px;height:18px;letter-spacing:-0.090px;">Life</div>
<div class="c" style="left:447px;top:776px;width:207px;height:18px;letter-spacing:-0.006px;">Tranquilize</div>
<div class="c" style="left:655px;top:776px;width:489px;height:18px;letter-spacing:0.008px;">Attacks 3 times with a 50% chance each hit to add Sleep</div>
<div class="c" style="left:1145px;top:776px;width:147px;height:18px;letter-spacing:-0.038px;">Ability_Life_Hack_and_Slash</div>
<div class="c" style="left:1293px;top:776px;width:71px;height:18px;letter-spacing:0.068px;">Attack_02</div>
<div class="c" style="left:1365px;top:776px;width:80px;height:18px;letter-spacing:-0.865px;">ACTIVE</div>
<div class="c" style="left:1446px;top:776px;width:96px;height:18px;letter-spacing:-0.706px;">ENEMY</div>
<div class="c" style="left:1543px;top:776px;width:141px;height:18px;letter-spacing:0.163px;">Dumb Attack</div>
<div class="c r" style="left:1685px;top:776px;width:143px;height:18px;letter-spacing:0.220px;">0.344 per hit</div>
<div class="c" style="left:1829px;top:776px;width:24px;height:18px;letter-spacing:0.044px;">5 prc</div>
<div class="c" style="left:24px;top:796px;width:156px;height:18px;letter-spacing:-0.438px;">Eagle Caesar</div>
<div class="c" style="left:181px;top:796px;width:34px;height:18px;letter-spacing:-1.167px;">SUP</div>
<div class="c" style="left:287px;top:796px;width:159px;height:18px;letter-spacing:-0.090px;">Life</div>
<div class="c" style="left:447px;top:796px;width:207px;height:18px;letter-spacing:0.566px;">Mend</div>
<div class="c" style="left:655px;top:796px;width:489px;height:18px;letter-spacing:-0.130px;">Heals all allies for 35% HP</div>
<div class="c" style="left:1145px;top:796px;width:147px;height:18px;letter-spacing:0.079px;">Ability_Life_Healing_Strike</div>
<div class="c" style="left:1293px;top:796px;width:71px;height:18px;letter-spacing:-0.465px;">Cast</div>
<div class="c" style="left:1365px;top:796px;width:80px;height:18px;letter-spacing:-0.865px;">ACTIVE</div>
<div class="c" style="left:1446px;top:796px;width:96px;height:18px;letter-spacing:-1.160px;">ALLY</div>
<div class="c" style="left:1543px;top:796px;width:141px;height:18px;letter-spacing:0.030px;">Dumb Heal</div>
<div class="c" style="left:1829px;top:796px;width:24px;height:18px;letter-spacing:-0.099px;">5 Heal</div>
<div class="c" style="left:24px;top:816px;width:156px;height:18px;letter-spacing:-0.438px;">Eagle Caesar</div>
<div class="c" style="left:181px;top:816px;width:34px;height:18px;letter-spacing:-1.167px;">SUP</div>
<div class="c" style="left:287px;top:816px;width:159px;height:18px;letter-spacing:0.836px;">Myth</div>
<div class="c" style="left:447px;top:816px;width:207px;height:18px;letter-spacing:0.211px;">Mineralize</div>
<div class="c" style="left:655px;top:816px;width:489px;height:18px;letter-spacing:0.062px;">Attacks 3 times with a 50% chance each hit to add Petrify</div>
<div class="c" style="left:1145px;top:816px;width:147px;height:18px;letter-spacing:0.100px;">Ability_Myth_Hack_and_Slash</div>
<div class="c" style="left:1293px;top:816px;width:71px;height:18px;letter-spacing:0.068px;">Attack_02</div>
<div class="c" style="left:1365px;top:816px;width:80px;height:18px;letter-spacing:-0.865px;">ACTIVE</div>
<div class="c" style="left:1446px;top:816px;width:96px;height:18px;letter-spacing:-0.706px;">ENEMY</div>
<div class="c" style="left:1543px;top:816px;width:141px;height:18px;letter-spacing:0.163px;">Dumb Attack</div>
<div class="c r" style="left:1685px;top:816px;width:143px;height:18px;letter-spacing:0.220px;">0.344 per hit</div>
<div class="c" style="left:1829px;top:816px;width:24px;height:18px;letter-spacing:0.044px;">5 prc</div>
<div class="c" style="left:24px;top:836px;width:156px;height:18px;letter-spacing:-0.438px;">Eagle Caesar</div>
<div class="c" style="left:181px;top:836px;width:34px;height:18px;letter-spacing:-1.167px;">SUP</div>
<div class="c" style="left:287px;top:836px;width:159px;height:18px;letter-spacing:0.836px;">Myth</div>
<div class="c" style="left:447px;top:836px;width:207px;height:18px;letter-spacing:0.131px;">Abate</div>
<div class="c" style="left:655px;top:836px;width:489px;height:18px;letter-spacing:0.006px;">Attacks all enemies with a 50% chance to remove a Pip</div>
<div class="c" style="left:1145px;top:836px;width:147px;height:18px;letter-spacing:0.129px;">Ability_Myth_Hack_and_Cast</div>
<div class="c" style="left:1293px;top:836px;width:71px;height:18px;letter-spacing:-0.465px;">Cast</div>
<div class="c" style="left:1365px;top:836px;width:80px;height:18px;letter-spacing:-0.865px;">ACTIVE</div>
<div class="c" style="left:1446px;top:836px;width:96px;height:18px;letter-spacing:-0.706px;">ENEMY</div>
<div class="c" style="left:1543px;top:836px;width:141px;height:18px;letter-spacing:0.163px;">Dumb Attack</div>
<div class="c r" style="left:1685px;top:836px;width:143px;height:18px;letter-spacing:0.073px;">0.5</div>
<div class="c" style="left:1829px;top:836px;width:24px;height:18px;letter-spacing:-0.051px;">5 damage</div>
<div class="c" style="left:24px;top:856px;width:156px;height:18px;letter-spacing:-0.438px;">Eagle Caesar</div>
<div class="c" style="left:181px;top:856px;width:34px;height:18px;letter-spacing:-1.182px;">DEF</div>
<div class="c" style="left:287px;top:856px;width:159px;height:18px;letter-spacing:0.178px;">Storm</div>
<div class="c" style="left:447px;top:856px;width:207px;height:18px;letter-spacing:-0.332px;">Paralyze</div>
<div class="c" style="left:655px;top:856px;width:489px;height:18px;letter-spacing:0.032px;">Attacks 3 times with a 50% chance each hit to add Stun</div>
<div class="c" style="left:1145px;top:856px;width:147px;height:18px;letter-spacing:0.008px;">Ability_Storm_Hack_and_Slash</div>
<div class="c" style="left:1293px;top:856px;width:71px;height:18px;letter-spacing:0.068px;">Attack_02</div>
<div class="c" style="left:1365px;top:856px;width:80px;height:18px;letter-spacing:-0.865px;">ACTIVE</div>
<div class="c" style="left:1446px;top:856px;width:96px;height:18px;letter-spacing:-0.706px;">ENEMY</div>
<div class="c" style="left:1543px;top:856px;width:141px;height:18px;letter-spacing:0.163px;">Dumb Attack</div>
<div class="c r" style="left:1685px;top:856px;width:143px;height:18px;letter-spacing:0.220px;">0.344 per hit</div>
<div class="c" style="left:1829px;top:856px;width:24px;height:18px;letter-spacing:0.044px;">5 prc</div>
<div class="c" style="left:655px;top:876px;width:489px;height:17px;letter-spacing:0.012px;">Attacks all enemies with a 25% chance to add Stun, and dealing extra damage</div>
<div class="c r" style="left:1685px;top:876px;width:143px;height:17px;line-height:37px;letter-spacing:0.073px;">0.5</div>
<div class="fb" style="left:163px;top:236px"></div><svg style="left:168px;top:243px" width="7" height="4" viewBox="0 0 7 4"><path d="M0 0H7L3.5 4Z" fill="#505050"/></svg>
<div class="fb" style="left:198px;top:236px"></div><svg style="left:203px;top:243px" width="7" height="4" viewBox="0 0 7 4"><path d="M0 0H7L3.5 4Z" fill="#505050"/></svg>
<div class="fb" style="left:269px;top:236px"></div><svg style="left:274px;top:243px" width="7" height="4" viewBox="0 0 7 4"><path d="M0 0H7L3.5 4Z" fill="#505050"/></svg>
<div class="fb" style="left:429px;top:236px"></div><svg style="left:434px;top:243px" width="7" height="4" viewBox="0 0 7 4"><path d="M0 0H7L3.5 4Z" fill="#505050"/></svg>
<div class="fb" style="left:637px;top:236px"></div><svg style="left:642px;top:243px" width="7" height="4" viewBox="0 0 7 4"><path d="M0 0H7L3.5 4Z" fill="#505050"/></svg>
<div class="fb" style="left:1127px;top:236px"></div><svg style="left:1132px;top:243px" width="7" height="4" viewBox="0 0 7 4"><path d="M0 0H7L3.5 4Z" fill="#505050"/></svg>
<div class="fb" style="left:1275px;top:236px"></div><svg style="left:1280px;top:243px" width="7" height="4" viewBox="0 0 7 4"><path d="M0 0H7L3.5 4Z" fill="#505050"/></svg>
<div class="fb" style="left:1347px;top:236px"></div><svg style="left:1352px;top:243px" width="7" height="4" viewBox="0 0 7 4"><path d="M0 0H7L3.5 4Z" fill="#505050"/></svg>
<div class="fb" style="left:1428px;top:236px"></div><svg style="left:1433px;top:243px" width="7" height="4" viewBox="0 0 7 4"><path d="M0 0H7L3.5 4Z" fill="#505050"/></svg>
<div class="fb" style="left:1525px;top:236px"></div><svg style="left:1530px;top:243px" width="7" height="4" viewBox="0 0 7 4"><path d="M0 0H7L3.5 4Z" fill="#505050"/></svg>
<div class="fb" style="left:1667px;top:236px"></div><svg style="left:1672px;top:243px" width="7" height="4" viewBox="0 0 7 4"><path d="M0 0H7L3.5 4Z" fill="#505050"/></svg>
<div class="fb" style="left:1811px;top:236px"></div><svg style="left:1816px;top:243px" width="7" height="4" viewBox="0 0 7 4"><path d="M0 0H7L3.5 4Z" fill="#505050"/></svg>
<div style="left:22px;top:233px;width:160px;height:2px;background:#217346"></div>
<div style="left:22px;top:254px;width:156px;height:2px;background:#217346"></div>
<div style="left:22px;top:233px;width:2px;height:23px;background:#217346"></div>
<div style="left:180px;top:233px;width:2px;height:19px;background:#217346"></div>
<div style="left:177px;top:251px;width:7px;height:7px;background:#fff"></div>
<div style="left:178px;top:252px;width:5px;height:5px;background:#217346"></div>
<div style="left:1857px;top:217px;width:15px;height:15px;border:1px solid #ababab;box-sizing:border-box;background:#fff"></div>
<svg style="left:1861px;top:222px;" width="7" height="4" viewBox="0 0 7 4"><path d="M0 4 3.500 0 7 4Z" fill="#777"/></svg>
<div style="left:1857px;top:233px;width:15px;height:16px;border:1px solid #ababab;box-sizing:border-box;background:#fff"></div>
<div style="left:1857px;top:249px;width:15px;height:629px;background:#f0f0f0"></div>
<div style="left:1857px;top:878px;width:15px;height:15px;border:1px solid #ababab;box-sizing:border-box;background:#fff"></div>
<svg style="left:1861px;top:883.5px" width="7" height="4" viewBox="0 0 7 4"><path d="M0 0H7L3.5 4Z" fill="#777"/></svg>
</div>
<div id="ui">
<div style="left:0px;top:0px;width:1879px;height:2px;background:#3b393a"></div>
<div style="left:1876px;top:0px;width:3px;height:942px;background:#454344"></div>
<div style="left:0px;top:2px;width:1876px;height:1px;background:#217346"></div>
<div style="left:1875px;top:2px;width:1px;height:940px;background:#217346"></div>
<svg style="left:8px;top:9px;" width="16" height="16" viewBox="0 0 16 16"><path d="M10 1.6 16 1.6 16 13.6 10 13.6Z" fill="#fff" stroke="#217346" stroke-width="1"/><path d="M11 3.5h4M11 5.5h4M11 7.5h4M11 9.5h4M11 11.5h4M13 2v11" stroke="#217346" stroke-width="1" fill="none"/><path d="M0 1.7 10.3 0V15.4L0 13.6Z" fill="#217346"/><path d="M2.6 4.4h1.9l1 2 1-2h1.8l-1.9 3.2 2 3.4H6.5L5.4 8.9 4.3 11H2.5l2-3.4Z" fill="#fff"/></svg>
<svg style="left:38px;top:10px;" width="14" height="14" viewBox="0 0 14 14"><path d="M0 0H14V14H0Z" fill="#8041a0"/><path d="M2 1H12V7H2Z" fill="#fff"/><path d="M3 9H11V14H3Z" fill="#fff"/><path d="M5 10.5H7V14H5Z" fill="#8041a0"/></svg>
<svg style="left:66px;top:9px;" width="16" height="15" viewBox="0 0 16 15"><path d="M7 1.600 2 5 7 8.400" fill="none" stroke="#3b78b9" stroke-width="2.200"/><path d="M2.500 5H9.500C13.200 5 14.800 7.600 14.400 10 14 12.200 12 13.400 9.600 13.500" fill="none" stroke="#3b78b9" stroke-width="2.200"/></svg>
<svg style="left:87px;top:15px" width="5" height="3" viewBox="0 0 5 3"><path d="M0 0H5L2.5 3Z" fill="#555"/></svg>
<svg style="left:106px;top:9px;" width="16" height="15" viewBox="0 0 16 15"><path d="M9 1.600 14 5 9 8.400" fill="none" stroke="#b2b2b2" stroke-width="2.200"/><path d="M13.500 5H6.500C2.800 5 1.200 7.600 1.600 10 2 12.200 4 13.400 6.400 13.500" fill="none" stroke="#b2b2b2" stroke-width="2.200"/></svg>
<svg style="left:127px;top:15px" width="5" height="3" viewBox="0 0 5 3"><path d="M0 0H5L2.5 3Z" fill="#c4c4c4"/></svg>
<div style="left:146px;top:15px;width:5px;height:1px;background:#555"></div>
<svg style="left:146px;top:18px" width="5" height="3" viewBox="0 0 5 3"><path d="M0 0H5L2.5 3Z" fill="#555"/></svg>
<div class="t" style="left:837.5px;top:9.5px;letter-spacing:-0.255px;color:#444;">Spiral RPG Combat Effects M9 - Excel</div>
<div class="t" style="left:1739.5px;top:9px;font-size:14px;color:#707070;font-weight:700;">?</div>
<svg style="left:1766px;top:12px;" width="13" height="10" viewBox="0 0 13 10"><path d="M.5 .5H12.5V9.5H.5ZM.5 2.5H12.5" fill="none" stroke="#777" stroke-width="1"/><path d="M6.5 4.3V9M4.3 6.4 6.5 4.3 8.7 6.4" fill="none" stroke="#777" stroke-width="1.1"/></svg>
<div style="left:1797px;top:18px;width:9px;height:2px;background:#777"></div>
<svg style="left:1826px;top:12px;" width="10" height="10" viewBox="0 0 10 10"><path d="M.5 1H9.5V9.5H.5Z" fill="none" stroke="#777"/><path d="M0 0H10V2.4H0Z" fill="#777"/></svg>
<svg style="left:1855px;top:12px;" width="10" height="10" viewBox="0 0 10 10"><path d="M.8 .8 9.2 9.2M9.2 .8 .8 9.2" stroke="#777" stroke-width="2"/></svg>
<div class="t" style="left:1838.5px;top:33px;color:#444;width:36.5px;overflow:hidden;white-space:nowrap;letter-spacing:.1px;">Sign in</div>
<div style="left:0px;top:55px;width:1875px;height:1px;background:#d4d4d4"></div>
<div style="left:0px;top:31px;width:57px;height:25px;background:#217346"></div>
<div class="t" style="left:16.7px;top:35.5px;letter-spacing:-0.911px;color:#fff;">FILE</div>
<div style="left:61px;top:31px;width:62px;height:25px;background:#fff;border:1px solid #d4d4d4;border-bottom:none;box-sizing:border-box"></div>
<div class="t" style="left:73.5px;top:35.5px;color:#217346;">HOME</div>
<div class="t" style="left:137.5px;top:35.5px;letter-spacing:-1.066px;color:#444;">INSERT</div>
<div class="t" style="left:203.9px;top:35.5px;letter-spacing:-0.702px;color:#444;">PAGE LAYOUT</div>
<div class="t" style="left:307.5px;top:35.5px;letter-spacing:-0.586px;color:#444;">FORMULAS</div>
<div class="t" style="left:398.1px;top:35.5px;letter-spacing:-0.284px;color:#444;">DATA</div>
<div class="t" style="left:455.9px;top:35.5px;letter-spacing:-1.207px;color:#444;">REVIEW</div>
<div class="t" style="left:524.3px;top:35.5px;letter-spacing:-0.718px;color:#444;">VIEW</div>
<div class="t" style="left:580.7px;top:35.5px;letter-spacing:-0.235px;color:#444;">ADD-INS</div>
<div class="t" style="left:656.9px;top:35.5px;letter-spacing:-0.311px;color:#444;">TEAM</div>
<div style="left:0px;top:148px;width:1875px;height:1px;background:#d4d4d4"></div>
<svg style="left:10px;top:63px;" width="30" height="32" viewBox="0 0 30 32"><path d="M1 5.5Q1 4 2.5 4H23.5Q25 4 25 5.5V27.3Q25 28.8 23.5 28.8H2.5Q1 28.8 1 27.3Z" fill="#eac47c"/><path d="M5.5 4H20.5V11H5.5Z" fill="#fff"/><path d="M6 7.6V5.6Q6 4.4 7.2 4.4H10.2V2.6Q10.2 1.3 11.5 1.3H14.5Q15.8 1.3 15.8 2.6V4.4H18.8Q20 4.4 20 5.6V7.6Z" fill="#777"/><path d="M12.2 2.8H13.8V4.4H12.2Z" fill="#fff"/><path d="M15.5 12.6H23.6L28.4 17.4V30.4H15.5Z" fill="#fff" stroke="#777" stroke-width="1"/><path d="M23.5 12.8V17.5H28.2" fill="none" stroke="#777" stroke-width="1"/></svg>
<div class="t" style="left:9.3px;top:97px;letter-spacing:-0.477px;color:#444;">Paste</div>
<svg style="left:20px;top:119px" width="5" height="3" viewBox="0 0 5 3"><path d="M0 0H5L2.5 3Z" fill="#777"/></svg>
<svg style="left:47px;top:61px;" width="16" height="17" viewBox="0 0 16 17"><path d="M4 1.400 10.200 11M12 1.400 5.800 11" stroke="#666" stroke-width="2" fill="none"/><circle cx="3.900" cy="13.100" r="2.300" fill="#fff" stroke="#4a86c8" stroke-width="1.300"/><circle cx="12.100" cy="13.100" r="2.300" fill="#fff" stroke="#4a86c8" stroke-width="1.300"/></svg>
<div class="t" style="left:65.5px;top:62.5px;letter-spacing:0.438px;color:#444;">Cut</div>
<svg style="left:46px;top:85px;" width="17" height="16" viewBox="0 0 17 16"><path d="M1.5 1.5H5.6L8 3.9V11.5H1.5Z" fill="#fff" stroke="#777"/><path d="M3 5.5H6M3 7.5H6M3 9.5H6" stroke="#4a86c8" fill="none"/><path d="M7.5 4.9H12.4L15.5 8V14.5H7.5Z" fill="#fff" stroke="#777"/><path d="M9 8.5H12.5M9 10.5H14M9 12.5H14" stroke="#4a86c8" fill="none"/></svg>
<div class="t" style="left:65.5px;top:85.5px;letter-spacing:0.246px;color:#444;">Copy</div>
<svg style="left:104px;top:92px" width="5" height="3" viewBox="0 0 5 3"><path d="M0 0H5L2.5 3Z" fill="#777"/></svg>
<svg style="left:46px;top:108px;" width="18" height="16" viewBox="0 0 18 16"><path d="M1.2 7.4 7 4.2 11.6 9.6 8.2 14.8Z" fill="#eac47c"/><path d="M6.8 3.4 9.8 1.4 14.4 7.2 11.6 9.4Z" fill="#6a6a6a"/><path d="M11.6 3.6 15.2 .8 16.8 2.8 13.2 5.6Z" fill="#6a6a6a"/></svg>
<div class="t" style="left:65.5px;top:108.8px;letter-spacing:-0.026px;color:#444;">Format Painter</div>
<div class="t" style="left:43.5px;top:132px;letter-spacing:-0.042px;color:#666;">Clipboard</div>
<svg style="left:144px;top:137px;" width="8" height="8" viewBox="0 0 8 8"><path d="M.5 5V.5H5" fill="none" stroke="#777"/><path d="M3 3 7 7M7 3.6V7H3.6" fill="none" stroke="#777" stroke-width="1.1"/></svg>
<div style="left:155px;top:60px;width:1px;height:83px;background:#e1e1e1"></div>
<div style="left:160px;top:67px;width:111px;height:23px;border:1px solid #ababab;box-sizing:border-box;background:#fff"></div>
<div style="left:271px;top:67px;width:43px;height:23px;border:1px solid #ababab;box-sizing:border-box;background:#fff"></div>
<div class="t" style="left:163px;top:70.5px;letter-spacing:0.069px;color:#000;">Calibri</div>
<svg style="left:261px;top:77px" width="5" height="3" viewBox="0 0 5 3"><path d="M0 0H5L2.5 3Z" fill="#666"/></svg>
<div class="t" style="left:274px;top:70.5px;letter-spacing:0.266px;color:#000;">11</div>
<svg style="left:304px;top:77px" width="5" height="3" viewBox="0 0 5 3"><path d="M0 0H5L2.5 3Z" fill="#666"/></svg>
<div class="t" style="left:320px;top:71.5px;font-size:14px;color:#555;">A</div>
<svg style="left:328px;top:70px;" width="5" height="3" viewBox="0 0 5 3"><path d="M0 3 2.5 0 5 3Z" fill="#3b78b9"/></svg>
<div class="t" style="left:342.5px;top:72.5px;color:#555;">A</div>
<svg style="left:350px;top:70px;" width="5" height="3" viewBox="0 0 5 3"><path d="M0 0H5L2.5 3Z" fill="#3b78b9"/></svg>
<div class="t" style="left:160.5px;top:100.5px;font-size:12.5px;color:#444;font-weight:700;width:20px;text-align:center;">B</div>
<div class="t" style="left:182.5px;top:100.5px;font-size:13.5px;color:#444;font-weight:700;width:20px;text-align:center;font-family:'Liberation Serif',serif;font-style:italic;">I</div>
<div class="t" style="left:204.5px;top:100.5px;font-size:12.5px;color:#444;font-weight:700;width:20px;text-align:center;">U</div>
<div style="left:210px;top:114px;width:9px;height:1px;background:#444"></div>
<svg style="left:229px;top:108px" width="5" height="3" viewBox="0 0 5 3"><path d="M0 0H5L2.5 3Z" fill="#777"/></svg>
<div style="left:242px;top:98px;width:1px;height:22px;background:#e1e1e1"></div>
<svg style="left:251px;top:102px;" width="14" height="14" viewBox="0 0 14 14"><path d="M0 .5H13M0 6.500H13M.5 0V12M6.500 0V12M12.500 0V12" fill="none" stroke="#777" stroke-dasharray="1 1" shape-rendering="crispEdges"/><path d="M0 12.500H13" stroke="#555" stroke-width="1" shape-rendering="crispEdges"/></svg>
<svg style="left:272px;top:108px" width="5" height="3" viewBox="0 0 5 3"><path d="M0 0H5L2.5 3Z" fill="#777"/></svg>
<div style="left:285px;top:98px;width:1px;height:22px;background:#e1e1e1"></div>
<svg style="left:292px;top:100px;" width="18" height="18" viewBox="0 0 18 18"><path d="M4.5 8.4 9.6 3.2 14.2 7.8 9 12.8Z" fill="#fff" stroke="#666" stroke-width="1"/><path d="M7.4 5.4V2.6Q7.4 1.2 8.6 1.2 9.8 1.2 9.8 2.6V4" fill="none" stroke="#666" stroke-width="1"/><path d="M14.4 7.2Q16.6 8.2 15.8 11.4 14.2 9.4 13 8.6Z" fill="#3b78b9"/><path d="M1 13H17V17H1Z" fill="#ffff00"/></svg>
<svg style="left:315px;top:108px" width="5" height="3" viewBox="0 0 5 3"><path d="M0 0H5L2.5 3Z" fill="#777"/></svg>
<div class="t" style="left:325px;top:100px;font-size:13px;color:#555;font-weight:400;width:20px;text-align:center;">A</div>
<div style="left:327px;top:113px;width:16px;height:4px;background:#ff0000"></div>
<svg style="left:349px;top:108px" width="5" height="3" viewBox="0 0 5 3"><path d="M0 0H5L2.5 3Z" fill="#777"/></svg>
<div class="t" style="left:238.9px;top:132px;letter-spacing:0.146px;color:#666;">Font</div>
<svg style="left:351px;top:137px;" width="8" height="8" viewBox="0 0 8 8"><path d="M.5 5V.5H5" fill="none" stroke="#777"/><path d="M3 3 7 7M7 3.6V7H3.6" fill="none" stroke="#777" stroke-width="1.1"/></svg>
<div style="left:362px;top:60px;width:1px;height:83px;background:#e1e1e1"></div>
<div style="left:371px;top:70px;width:14px;height:1px;background:#666"></div><div style="left:371px;top:73px;width:14px;height:1px;background:#666"></div><div style="left:371px;top:76px;width:14px;height:1px;background:#666"></div>
<div style="left:393px;top:74px;width:14px;height:1px;background:#666"></div><div style="left:393px;top:77px;width:14px;height:1px;background:#666"></div><div style="left:393px;top:80px;width:14px;height:1px;background:#666"></div>
<div style="left:411px;top:67px;width:22px;height:23px;background:#9fd5b7"></div>
<div style="left:415px;top:79px;width:14px;height:1px;background:#555"></div><div style="left:415px;top:82px;width:14px;height:1px;background:#555"></div><div style="left:415px;top:85px;width:14px;height:1px;background:#555"></div>
<div style="left:437px;top:67px;width:1px;height:22px;background:#e1e1e1"></div>
<svg style="left:444px;top:68px;" width="19" height="19" viewBox="0 0 19 19"><text x="0" y="0" transform="translate(4.600 12.200) rotate(-45)" font-family="Liberation Sans, sans-serif" font-size="11" fill="#555" stroke="#555" stroke-width=".2">ab</text><path d="M7.500 16.400 16.700 7.500M12.800 7.400H16.800V11.400" fill="none" stroke="#555" stroke-width="1.200"/></svg>
<svg style="left:465px;top:77px" width="5" height="3" viewBox="0 0 5 3"><path d="M0 0H5L2.5 3Z" fill="#777"/></svg>
<div style="left:371px;top:104px;width:14px;height:1px;background:#666"></div><div style="left:371px;top:107px;width:10px;height:1px;background:#666"></div><div style="left:371px;top:110px;width:14px;height:1px;background:#666"></div><div style="left:371px;top:113px;width:10px;height:1px;background:#666"></div>
<div style="left:393px;top:104px;width:14px;height:1px;background:#666"></div><div style="left:395px;top:107px;width:10px;height:1px;background:#666"></div><div style="left:393px;top:110px;width:14px;height:1px;background:#666"></div><div style="left:395px;top:113px;width:10px;height:1px;background:#666"></div>
<div style="left:415px;top:104px;width:14px;height:1px;background:#666"></div><div style="left:419px;top:107px;width:10px;height:1px;background:#666"></div><div style="left:415px;top:110px;width:14px;height:1px;background:#666"></div><div style="left:419px;top:113px;width:10px;height:1px;background:#666"></div>
<div style="left:437px;top:98px;width:1px;height:22px;background:#e1e1e1"></div>
<div style="left:447px;top:104px;width:4px;height:1px;background:#666"></div><div style="left:452px;top:107px;width:9px;height:1px;background:#666"></div><div style="left:452px;top:110px;width:6px;height:1px;background:#666"></div><div style="left:447px;top:113px;width:4px;height:1px;background:#666"></div>
<div style="left:452px;top:104px;width:9px;height:1px;background:#666"></div><div style="left:452px;top:113px;width:9px;height:1px;background:#666"></div>
<svg style="left:444px;top:105px;" width="8" height="8" viewBox="0 0 8 8"><path d="M.2 4 3.800 .4 5 1.600 3.600 3H7.400V5H3.600L5 6.400 3.800 7.600Z" fill="#3b78b9"/></svg>
<div style="left:469px;top:104px;width:4px;height:1px;background:#666"></div><div style="left:474px;top:107px;width:9px;height:1px;background:#666"></div><div style="left:474px;top:110px;width:6px;height:1px;background:#666"></div><div style="left:469px;top:113px;width:4px;height:1px;background:#666"></div>
<div style="left:474px;top:104px;width:9px;height:1px;background:#666"></div><div style="left:474px;top:113px;width:9px;height:1px;background:#666"></div>
<svg style="left:466.5px;top:105px;" width="8" height="8" viewBox="0 0 8 8"><path d="M7.800 4 4.200 .4 3 1.600 4.400 3H.6V5H4.400L3 6.400 4.200 7.600Z" fill="#3b78b9"/></svg>
<div style="left:490px;top:66px;width:1px;height:55px;background:#e1e1e1"></div>
<svg style="left:497px;top:69px;" width="18" height="17" viewBox="0 0 18 17"><path d="M1.5 1.5H10.5V5.5H1.5ZM1.5 8.5H10.5V15.5H1.5Z" fill="#fff" stroke="#666"/><path d="M3 3.5H15M3 10.5H9M3 12.5H9" stroke="#3b78b9" fill="none"/><path d="M16.5 5.6C16.8 8.4 15 9.4 11.6 9.4M13.8 7.2 11.4 9.4 13.8 11.6" stroke="#3b78b9" fill="none" stroke-width="1.1"/></svg>
<div class="t" style="left:516.9px;top:70.5px;letter-spacing:-0.131px;color:#444;">Wrap Text</div>
<svg style="left:498px;top:101px;" width="16" height="16" viewBox="0 0 16 16"><path d="M.5 .5H14.5V14.5H.5ZM.5 3.5H14.5M.5 11.5H14.5M7.5 .5V3.5M7.5 11.5V14.5" fill="#fff" stroke="#666"/><path d="M2.6 7.5H12.4M4.2 5.8 2.4 7.5 4.2 9.2M10.8 5.8 12.6 7.5 10.8 9.2" fill="none" stroke="#3b78b9" stroke-width="1.1"/></svg>
<div class="t" style="left:516.9px;top:101.5px;letter-spacing:0.064px;color:#444;">Merge &amp; Center</div>
<svg style="left:612px;top:108px" width="5" height="3" viewBox="0 0 5 3"><path d="M0 0H5L2.5 3Z" fill="#777"/></svg>
<div class="t" style="left:459.5px;top:132px;letter-spacing:0.069px;color:#666;">Alignment</div>
<svg style="left:615px;top:137px;" width="8" height="8" viewBox="0 0 8 8"><path d="M.5 5V.5H5" fill="none" stroke="#777"/><path d="M3 3 7 7M7 3.6V7H3.6" fill="none" stroke="#777" stroke-width="1.1"/></svg>
<div style="left:626px;top:60px;width:1px;height:83px;background:#e1e1e1"></div>
<div style="left:631px;top:67px;width:131px;height:23px;border:1px solid #ababab;box-sizing:border-box;background:#fff"></div>
<div class="t" style="left:634px;top:70.5px;letter-spacing:-0.372px;color:#000;">General</div>
<svg style="left:752px;top:77px" width="5" height="3" viewBox="0 0 5 3"><path d="M0 0H5L2.5 3Z" fill="#666"/></svg>
<div class="t" style="left:632.5px;top:99px;font-size:16.5px;color:#555;line-height:20px;height:20px;width:20px;text-align:center;">$</div>
<svg style="left:656px;top:108px" width="5" height="3" viewBox="0 0 5 3"><path d="M0 0H5L2.5 3Z" fill="#777"/></svg>
<div class="t" style="left:664.5px;top:99.5px;font-size:16px;color:#555;line-height:20px;height:20px;width:24px;text-align:center;letter-spacing:-.6px;">%</div>
<div class="t" style="left:687.5px;top:93px;font-size:22px;color:#555;font-weight:700;line-height:20px;height:20px;width:20px;text-align:center;font-family:'Liberation Serif',serif;">,</div>
<div style="left:713px;top:98px;width:1px;height:22px;background:#e1e1e1"></div>
<svg style="left:721px;top:102px;" width="8" height="7" viewBox="0 0 8 7"><path d="M.3 3.5 3.3 .6M.3 3.5 3.3 6.4M.5 3.5H7.5" stroke="#3b78b9" stroke-width="1.2" fill="none"/></svg>
<div class="t" style="left:728.5px;top:101px;font-size:8px;color:#555;line-height:8px;height:8px;font-size:8px;letter-spacing:-.2px;line-height:8px;height:8px;">.0</div>
<div class="t" style="left:724px;top:108.5px;font-size:8px;color:#555;line-height:8px;height:8px;font-size:8px;letter-spacing:-.2px;line-height:8px;height:8px;">.00</div>
<div class="t" style="left:746px;top:101px;font-size:8px;color:#555;line-height:8px;height:8px;font-size:8px;letter-spacing:-.2px;line-height:8px;height:8px;">.00</div>
<svg style="left:743px;top:109px;" width="8" height="7" viewBox="0 0 8 7"><path d="M7.7 3.5 4.7 .6M7.7 3.5 4.7 6.4M7.5 3.5H.5" stroke="#3b78b9" stroke-width="1.2" fill="none"/></svg>
<div class="t" style="left:750.5px;top:108.5px;font-size:8px;color:#555;line-height:8px;height:8px;font-size:8px;letter-spacing:-.2px;line-height:8px;height:8px;">.0</div>
<div class="t" style="left:667.9px;top:132px;letter-spacing:-0.181px;color:#666;">Number</div>
<svg style="left:755px;top:137px;" width="8" height="8" viewBox="0 0 8 8"><path d="M.5 5V.5H5" fill="none" stroke="#777"/><path d="M3 3 7 7M7 3.6V7H3.6" fill="none" stroke="#777" stroke-width="1.1"/></svg>
<div style="left:766px;top:60px;width:1px;height:83px;background:#e1e1e1"></div>
<svg style="left:793px;top:64px;" width="31" height="31" viewBox="0 0 31 31"><path d="M.5 .5H27.5V24.5H.5Z" fill="#fff"/><path d="M7.5 .5V24.5M14 .5V6.5M20.5 .5V24.5M.5 6.5H27.5M.5 12.5H27.5M.5 18.5H27.5" stroke="#b4b4b4" fill="none"/><path d="M8 1H14V6H8Z" fill="#dc6142"/><path d="M8 7H19V12H8Z" fill="#4a82bd"/><path d="M8 13H17V18H8Z" fill="#dc6142"/><path d="M8 19H12V24H8Z" fill="#4a82bd"/><path d="M.5 .5H27.5V24.5H.5Z" fill="none" stroke="#8c8c8c"/><path d="M13 16H31V31H13Z" fill="#fff"/><path d="M14.5 17.5H29.5V29.5H14.5Z" fill="#fff" stroke="#8c8c8c"/><path d="M18.500 22.500H26M18.500 25.500H26" stroke="#444" stroke-width="1" fill="none"/><path d="M24.400 19.600 20 27.600" stroke="#444" stroke-width="1.100" fill="none"/></svg>
<div class="t" style="left:775.7px;top:97px;letter-spacing:0.214px;color:#444;">Conditional</div>
<div class="t" style="left:773px;top:112.5px;letter-spacing:0.174px;color:#444;">Formatting</div>
<svg style="left:835px;top:119px" width="5" height="3" viewBox="0 0 5 3"><path d="M0 0H5L2.5 3Z" fill="#777"/></svg>
<svg style="left:858px;top:66px;" width="30" height="29" viewBox="0 0 30 29"><path d="M.5 .5H24.5V20.5H.5Z" fill="#fff"/><path d="M6.5 5.5H24.5V20.5H6.5Z" fill="#c8dcf0"/><path d="M6.500 .5V20.5M12.500 .5V20.5M18.500 .5V20.5M.5 5.500H24.5M.5 10.500H24.5M.5 15.500H24.500" stroke="#b0b0b0" fill="none"/><path d="M.5 .5H24.5V20.5H.5Z" fill="none" stroke="#8c8c8c"/><path d="M29.500 4 17 16.500 21 21.500H26L30 13.500Z" fill="#fff"/><path d="M28.900 5.800V11.900L25.300 15.700 21.600 12.500Z" fill="#777"/><path d="M20.800 13.300 24.500 16.600 22.200 19 18.600 15.600Z" fill="#777"/><path d="M6.400 27.800Q10.400 24.800 12.600 21.400 14.400 18.600 17.400 19.600 20.400 21 19.200 24 17.600 27.800 12.400 27.800Z" fill="#4a82bd"/><path d="M13.600 21.600Q15.200 19.800 17.200 20.600 19 21.600 18.400 23.600L16.800 23 16.200 21.800 14.800 22Z" fill="#fff"/></svg>
<div class="t" style="left:845px;top:97px;letter-spacing:-0.180px;color:#444;">Format as</div>
<div class="t" style="left:852.7px;top:112.5px;letter-spacing:-0.018px;color:#444;">Table</div>
<svg style="left:884px;top:119px" width="5" height="3" viewBox="0 0 5 3"><path d="M0 0H5L2.5 3Z" fill="#777"/></svg>
<div style="left:901px;top:62px;width:547px;height:60px;border:1px solid #ababab;box-sizing:border-box;background:#fff"></div>
<div class="st" style="left:905px;top:67px;background:#ccccff;letter-spacing:-0.036px;">20% - Accent...</div>
<div class="st" style="left:1011px;top:67px;background:#ccccff;letter-spacing:-0.036px;">20% - Accent...</div>
<div class="st" style="left:1117px;top:67px;background:#ccccff;letter-spacing:-0.036px;">20% - Accent...</div>
<div class="st" style="left:1223px;top:67px;background:#dce6f1;letter-spacing:-0.036px;">20% - Accent...</div>
<div class="st" style="left:1329px;top:67px;background:#dce6f1;letter-spacing:-0.036px;">20% - Accent...</div>
<div class="st" style="left:905px;top:95px;background:#dce6f1;letter-spacing:-0.036px;">20% - Accent...</div>
<div class="st" style="left:1011px;top:95px;background:#dce6f1;letter-spacing:-0.036px;">20% - Accent...</div>
<div class="st" style="left:1117px;top:95px;background:#dce6f1;letter-spacing:-0.036px;">20% - Accent...</div>
<div class="st" style="left:1223px;top:95px;background:#dce6f1;letter-spacing:-0.036px;">20% - Accent...</div>
<div class="st" style="left:1329px;top:95px;background:#dce6f1;letter-spacing:-0.036px;">20% - Accent...</div>
<div style="left:1433px;top:62px;width:1px;height:60px;background:#ababab"></div>
<div style="left:1433px;top:83px;width:15px;height:1px;background:#ababab"></div>
<div style="left:1433px;top:102px;width:15px;height:1px;background:#ababab"></div>
<svg style="left:1438px;top:71px;" width="5" height="3" viewBox="0 0 5 3"><path d="M0 3 2.5 0 5 3Z" fill="#c8c8c8"/></svg>
<svg style="left:1438px;top:92px" width="5" height="3" viewBox="0 0 5 3"><path d="M0 0H5L2.5 3Z" fill="#666"/></svg>
<div style="left:1438px;top:109px;width:5px;height:1px;background:#666"></div>
<svg style="left:1438px;top:112px" width="5" height="3" viewBox="0 0 5 3"><path d="M0 0H5L2.5 3Z" fill="#666"/></svg>
<div class="t" style="left:1095.9px;top:132px;letter-spacing:-0.565px;color:#666;">Styles</div>
<div style="left:1455px;top:60px;width:1px;height:83px;background:#e1e1e1"></div>
<svg style="left:1468px;top:64px;" width="27" height="28" viewBox="0 0 27 28"><path d="M.5 .5H14.5V5.500H.5ZM7.500 .5V5.500" fill="#f4f0f6" stroke="#b8b4b8"/><path d="M11.500 8.500H25.500V13.500H11.500ZM18.500 8.500V13.500" fill="#dcd8dc" stroke="#b8b4b8"/><path d="M.5 16.500H14.500V26.500H.5ZM7.500 16.500V26.500M.5 21.500H14.500" fill="#f4f0f6" stroke="#b8b4b8"/><path d="M1.200 11 4.400 8 4.400 10.200H8V11.800H4.400V14Z" fill="#b4b4b4"/></svg>
<div class="t" style="left:1465.8px;top:97px;letter-spacing:-0.069px;color:#444;">Insert</div>
<svg style="left:1478px;top:119px" width="5" height="3" viewBox="0 0 5 3"><path d="M0 0H5L2.5 3Z" fill="#777"/></svg>
<svg style="left:1509px;top:64px;" width="31" height="29" viewBox="0 0 31 29"><path d="M.5 .5H14.500V5.500H.5ZM7.500 .5V5.500" fill="#fff" stroke="#666"/><path d="M6.500 8.500H14.500V13.500H6.500Z" fill="#c8dcf0" stroke="#666"/><path d="M15 8.500 18.500 11 15 13.500Z" fill="#c8dcf0"/><path d="M.5 17.500H14.500V27.500H.5ZM7.500 17.500V27.500M.5 22.500H14.500" fill="#fff" stroke="#666"/><path d="M13 14H20V20H13Z" fill="#fff"/><path d="M15.500 6.200 29 18.200M28.800 6 15.200 18.400" stroke="#d9593a" stroke-width="2.200" fill="none"/></svg>
<div class="t" style="left:1506px;top:97px;letter-spacing:-0.215px;color:#444;">Delete</div>
<svg style="left:1520px;top:119px" width="5" height="3" viewBox="0 0 5 3"><path d="M0 0H5L2.5 3Z" fill="#777"/></svg>
<svg style="left:1550px;top:62px;" width="30" height="33" viewBox="0 0 30 33"><path d="M1.500 1V6M23.500 1V6M3 3.500H22M5.400 1.200 3 3.500 5.400 5.800M19.600 1.200 22 3.500 19.600 5.800" stroke="#3b78b9" stroke-width="1.100" fill="none"/><path d="M1.500 7.500H28.500V27.500H1.500Z" fill="#fff"/><path d="M8.500 7.500V27.500M16.500 7.500V27.500M23.500 7.500V27.500M1.500 12.500H28.500M1.500 22.500H28.500" stroke="#b4b4b4" fill="none"/><path d="M9 13H16V22H9Z" fill="#4a82bd"/><path d="M1.500 7.500H28.500V27.500H1.500Z" fill="none" stroke="#777"/><path d="M1.500 27.500V31.500H8L10 29.500V27.500M10.500 29.500 12 31.500H17L20 27.800" stroke="#777" fill="none"/></svg>
<div class="t" style="left:1546.1px;top:97px;letter-spacing:0.064px;color:#444;">Format</div>
<svg style="left:1563px;top:119px" width="5" height="3" viewBox="0 0 5 3"><path d="M0 0H5L2.5 3Z" fill="#777"/></svg>
<div class="t" style="left:1511.1px;top:132px;letter-spacing:-0.574px;color:#666;">Cells</div>
<div style="left:1591px;top:60px;width:1px;height:83px;background:#e1e1e1"></div>
<svg style="left:1599px;top:62px;" width="16" height="16" viewBox="0 0 16 16"><path d="M.4 .3H15V2.500H4.400L9.600 7.500 4.400 12.500H15V14.700H.4V13L6.200 7.500 .4 2Z" fill="#444"/></svg>
<div class="t" style="left:1617.9px;top:62.8px;letter-spacing:0.077px;color:#444;">AutoSum</div>
<svg style="left:1678px;top:69px" width="5" height="3" viewBox="0 0 5 3"><path d="M0 0H5L2.5 3Z" fill="#777"/></svg>
<svg style="left:1600px;top:85px;" width="14" height="16" viewBox="0 0 14 16"><path d="M.5 .5H13.500V15H.5Z" fill="#fff" stroke="#777"/><path d="M0 0H14V2.600H0Z" fill="#777"/><path d="M7 5V12M3.800 8.800 7 12 10.200 8.800" stroke="#3b78b9" stroke-width="1.600" fill="none"/></svg>
<div class="t" style="left:1617.9px;top:85.2px;letter-spacing:-0.107px;color:#444;">Fill</div>
<svg style="left:1636px;top:92px" width="5" height="3" viewBox="0 0 5 3"><path d="M0 0H5L2.5 3Z" fill="#777"/></svg>
<svg style="left:1600px;top:109px;" width="15" height="14" viewBox="0 0 15 14"><path d="M.8 8 8.600 .6 13 4.800 5.400 12.200 3.400 12.200Z" fill="#e9788c"/><path d="M.8 8 3 5.800 7.600 10 5.400 12.200H3.600Z" fill="#f4b6c0"/><path d="M3 12.800H14" stroke="#666"/></svg>
<div class="t" style="left:1617.9px;top:108.9px;letter-spacing:-0.258px;color:#444;">Clear</div>
<svg style="left:1648px;top:115px" width="5" height="3" viewBox="0 0 5 3"><path d="M0 0H5L2.5 3Z" fill="#777"/></svg>
<div class="t" style="left:1693.5px;top:61px;font-size:16.5px;color:#4a86c8;line-height:20px;height:20px;-webkit-text-stroke:.4px #4a86c8;">A</div>
<div class="t" style="left:1694.5px;top:75px;font-size:16.5px;color:#9b59b6;line-height:20px;height:20px;-webkit-text-stroke:.4px #9b59b6;">Z</div>
<svg style="left:1706px;top:72px;" width="18" height="16" viewBox="0 0 18 16"><path d="M.5 .5H17L10.600 7.600V14.500H7.400V7.600Z" fill="#777"/><path d="M8.400 8H9.600V13.500H8.400Z" fill="#fff"/><path d="M2.600 1.400 8 7.400" stroke="#fff" stroke-width=".8"/></svg>
<div class="t" style="left:1691.7px;top:97px;letter-spacing:0.190px;color:#444;">Sort &amp;</div>
<div class="t" style="left:1692.2px;top:112.6px;letter-spacing:-0.129px;color:#444;">Filter</div>
<svg style="left:1721px;top:119px" width="5" height="3" viewBox="0 0 5 3"><path d="M0 0H5L2.5 3Z" fill="#777"/></svg>
<svg style="left:1739px;top:66px;" width="26" height="23" viewBox="0 0 26 23"><path d="M4 3H5V1H9V3H10V6H11V9H12V22H.5V12H1.500V9H3V6H4Z" fill="#6e6e6e"/><path d="M22 3H21V1H17V3H16V6H15V9H14V22H25.500V12H24.500V9H23V6H22Z" fill="#6e6e6e"/><path d="M11 10H15V14H11Z" fill="#6e6e6e"/><path d="M1.500 12.500V21.500M24.500 12.500V21.500" stroke="#fff" stroke-width=".7"/></svg>
<div class="t" style="left:1733.8px;top:97px;letter-spacing:0.302px;color:#444;">Find &amp;</div>
<div class="t" style="left:1731.9px;top:112.6px;letter-spacing:-0.360px;color:#444;">Select</div>
<svg style="left:1766px;top:119px" width="5" height="3" viewBox="0 0 5 3"><path d="M0 0H5L2.5 3Z" fill="#777"/></svg>
<div class="t" style="left:1666px;top:132px;letter-spacing:0.057px;color:#666;">Editing</div>
<div style="left:1778px;top:60px;width:1px;height:83px;background:#e1e1e1"></div>
<svg style="left:1856px;top:137px;" width="10" height="7" viewBox="0 0 10 7"><path d="M1 6 5 2 9 6" fill="none" stroke="#666" stroke-width="2"/></svg>
<div style="left:3px;top:159px;width:102px;height:26px;border:1px solid #c6c6c6;box-sizing:border-box;background:#fff"></div>
<div class="t" style="left:9.6px;top:164.5px;letter-spacing:-0.242px;font-size:12.5px;color:#444;">C1</div>
<svg style="left:91px;top:169.5px" width="7" height="4" viewBox="0 0 7 4"><path d="M0 0H7L3.5 4Z" fill="#777"/></svg>
<div style="left:119px;top:167px;width:2px;height:2px;background:#9a9a9a"></div>
<div style="left:119px;top:171px;width:2px;height:2px;background:#9a9a9a"></div>
<div style="left:119px;top:175px;width:2px;height:2px;background:#9a9a9a"></div>
<div style="left:135px;top:159px;width:110px;height:26px;border:1px solid #c6c6c6;box-sizing:border-box;background:#fff"></div>
<svg style="left:145px;top:164px;" width="18" height="17" viewBox="0 0 18 17"><path d="M1.500 1.200Q8 6 16.500 15.500M16.800 1.200Q6 6 1 15.200" stroke="#c6c6c6" stroke-width="2" fill="none" stroke-linecap="round"/></svg>
<svg style="left:180px;top:164px;" width="21" height="18" viewBox="0 0 21 18"><path d="M1.500 9 7.500 15.200 19 1.500" stroke="#cacaca" stroke-width="3" fill="none"/></svg>
<div class="t" style="left:217.5px;top:158.5px;font-size:22px;color:#666;font-weight:700;line-height:24px;height:24px;font-family:'Liberation Serif',serif;font-style:italic;">f</div>
<div class="t" style="left:225.5px;top:165px;font-size:15.5px;color:#666;font-weight:700;line-height:18px;height:18px;font-family:'Liberation Serif',serif;font-style:italic;">x</div>
<div style="left:248px;top:159px;width:1622px;height:46px;border:1px solid #c6c6c6;box-sizing:border-box;background:#fff"></div>
<div class="t" style="left:260px;top:164.5px;font-size:13.5px;color:#333;letter-spacing:0.053px;">Creature</div>
<svg style="left:1856px;top:168px;" width="10" height="7" viewBox="0 0 10 7"><path d="M1 6 5 2 9 6" fill="none" stroke="#666" stroke-width="2"/></svg>
<div style="left:0px;top:893px;width:1875px;height:28px;background:#f3f3f3"></div>
<div style="left:0px;top:893px;width:1854px;height:1px;background:#ababab"></div>
<svg style="left:25px;top:902px;" width="5" height="9" viewBox="0 0 5 9"><path d="M5 0V9L0 4.500Z" fill="#c0c0c0"/></svg>
<svg style="left:54px;top:902px;" width="5" height="9" viewBox="0 0 5 9"><path d="M0 0V9L5 4.500Z" fill="#c0c0c0"/></svg>
<div style="left:98px;top:893px;width:210px;height:25px;background:#fff;border-left:1px solid #ababab;border-right:1px solid #ababab;border-bottom:2px solid #217346;box-sizing:border-box"></div>
<div class="t" style="left:110.2px;top:898.5px;letter-spacing:-0.057px;font-size:13px;color:#217346;font-weight:700;">Combat Effects Working Copy</div>
<div class="t" style="left:320.3px;top:898.5px;letter-spacing:0.155px;font-size:13px;color:#444;">Import Sheet</div>
<div class="t" style="left:423.5px;top:898.5px;letter-spacing:-0.061px;font-size:13px;color:#444;">Power Ideas</div>
<div class="t" style="left:523px;top:898.5px;letter-spacing:0.085px;font-size:13px;color:#444;">Notes and Ratings</div>
<div class="t" style="left:660.4px;top:898.5px;letter-spacing:0.020px;font-size:13px;color:#444;">Unity Data</div>
<div class="t" style="left:752.3px;top:898.5px;letter-spacing:-0.039px;font-size:13px;color:#444;">Remaining Creature List</div>
<div style="left:411px;top:897px;width:1px;height:20px;background:#c6c6c6"></div>
<div style="left:509px;top:897px;width:1px;height:20px;background:#c6c6c6"></div>
<div style="left:646px;top:897px;width:1px;height:20px;background:#c6c6c6"></div>
<div style="left:736px;top:897px;width:1px;height:20px;background:#c6c6c6"></div>
<div style="left:907px;top:897px;width:1px;height:20px;background:#c6c6c6"></div>
<svg style="left:940px;top:898px;" width="18" height="18" viewBox="0 0 18 18"><circle cx="9" cy="9" r="7.500" fill="none" stroke="#777" stroke-width="1.100"/><path d="M5 9H13M9 5V13" stroke="#666" stroke-width="1.400"/></svg>
<div style="left:1469.5px;top:902px;width:2px;height:2px;background:#b0b0b0;border-radius:1px"></div>
<div style="left:1469.5px;top:906px;width:2px;height:2px;background:#b0b0b0;border-radius:1px"></div>
<div style="left:1469.5px;top:910px;width:2px;height:2px;background:#b0b0b0;border-radius:1px"></div>
<div style="left:1487px;top:900px;width:15px;height:15px;border:1px solid #ababab;box-sizing:border-box;background:#fff"></div>
<svg style="left:1492px;top:904px;" width="4" height="7" viewBox="0 0 4 7"><path d="M4 0V7L0 3.500Z" fill="#666"/></svg>
<div style="left:1502px;top:900px;width:335px;height:15px;background:#e8e8e8"></div>
<div style="left:1510px;top:900px;width:260px;height:15px;border:1px solid #ababab;box-sizing:border-box;background:#fff"></div>
<div style="left:1837px;top:900px;width:15px;height:15px;border:1px solid #ababab;box-sizing:border-box;background:#fff"></div>
<svg style="left:1843px;top:904px;" width="4" height="7" viewBox="0 0 4 7"><path d="M0 0V7L4 3.500Z" fill="#666"/></svg>
<div style="left:0px;top:921px;width:1876px;height:21px;background:#217346"></div>
<div class="t" style="left:4.9px;top:924px;letter-spacing:-0.901px;font-size:11px;color:#fff;">READY</div>
<div class="t" style="left:54px;top:924px;letter-spacing:-0.250px;font-size:11px;color:#fff;">120 OF 1384 RECORDS FOUND</div>
<div style="left:1572px;top:921px;width:38px;height:21px;background:#185c37"></div>
<svg style="left:1584px;top:925px;" width="13" height="13" viewBox="0 0 13 13"><path d="M.5 .5H12.500V12.500H.5ZM4.500 .5V12.500M8.500 .5V12.500M.5 4.500H12.500M.5 8.500H12.500" fill="none" stroke="#fff"/></svg>
<svg style="left:1622px;top:925px;" width="14" height="13" viewBox="0 0 14 13"><path d="M.5 .5H13.500V12.500H.5Z" fill="none" stroke="#fff"/><path d="M3.500 3.500H10.500V9.500H3.500ZM5 5.500H9M5 7.500H9" fill="none" stroke="#fff"/></svg>
<svg style="left:1660px;top:925px;" width="14" height="13" viewBox="0 0 14 13"><path d="M.5 .5H13.500V12.500H.5Z" fill="none" stroke="#fff"/><path d="M3 0H6V7H3ZM7.500 0H9.500V5H7.500Z" fill="#fff"/><path d="M.5 7.500H6" stroke="#fff"/></svg>
<div style="left:1691px;top:930px;width:6px;height:2px;background:#fff"></div>
<div style="left:1701px;top:931px;width:100px;height:1px;background:#fff"></div>
<div style="left:1749px;top:925px;width:4px;height:12px;background:#fff"></div>
<div style="left:1805px;top:930px;width:8px;height:2px;background:#fff"></div>
<div style="left:1808px;top:927px;width:2px;height:8px;background:#fff"></div>
<div class="t" style="left:1828.6px;top:924px;letter-spacing:-0.285px;font-size:11px;color:#fff;">100%</div>
</div>
</body></html>
